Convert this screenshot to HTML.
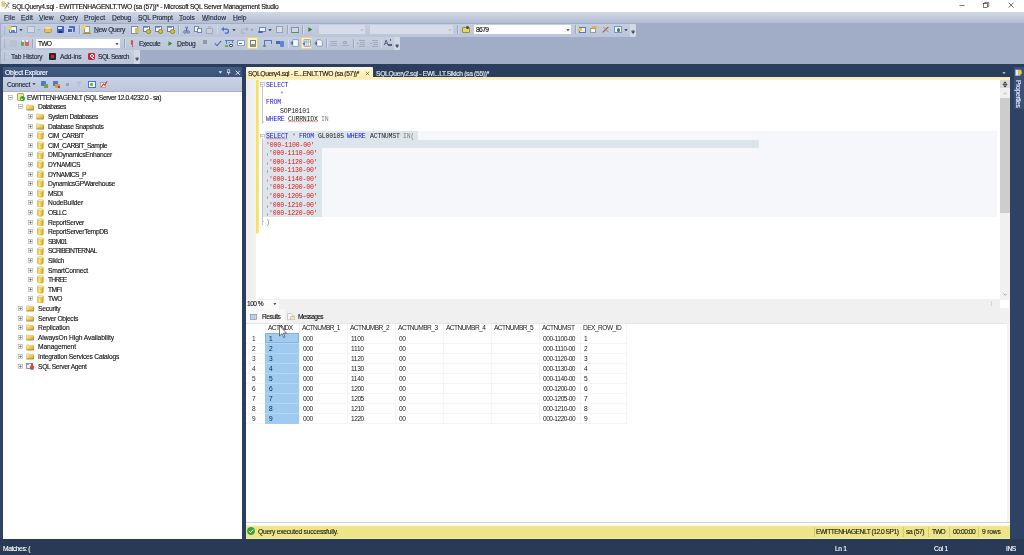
<!DOCTYPE html>
<html><head><meta charset="utf-8"><title>SQLQuery4.sql - Microsoft SQL Server Management Studio</title>
<style>
html,body{margin:0;padding:0;width:1024px;height:555px;overflow:hidden;background:#2c3e5e}
#r{position:relative;width:1024px;height:555px;overflow:hidden;font-family:"Liberation Sans",sans-serif}
#r div,#r span,#r svg{position:absolute;display:block}
.t{font-family:"Liberation Sans",sans-serif;white-space:pre;will-change:transform;-webkit-text-stroke:0.12px}
.t u{text-decoration-thickness:0.5px;text-underline-offset:0.4px;text-decoration-color:rgba(27,35,56,0.4)}
.m{font-family:"Liberation Mono",monospace;white-space:pre;will-change:transform}
</style></head>
<body><div id="r">
<div style="left:0px;top:0px;width:1024px;height:555px;background:#2c3e5e;"></div>
<div style="left:0px;top:0px;width:1024px;height:12px;background:#fff;"></div>
<svg style="left:1px;top:1.4px" width="9" height="9" viewBox="0 0 9 9"><path d="M0.8 1.2v3.6c0 1 3 1 3 0v-3.6z" fill="#e8d06a" stroke="#b09a3a" stroke-width="0.4"/><ellipse cx="2.3" cy="1.2" rx="1.5" ry="0.6" fill="#f7eeb0" stroke="#b09a3a" stroke-width="0.35"/><path d="M4.2 2.2l3.8 4.6M7.6 2.6l-3.6 5" stroke="#8a8a8a" stroke-width="1" fill="none"/><path d="M6.6 1.6l1.8 1.2" stroke="#6e6e6e" stroke-width="1.2"/></svg>
<span class="t" style="left:12.4px;top:3px;font-size:6.7px;line-height:8.71px;color:#111;letter-spacing:-0.281px;">SQLQuery4.sql - EWITTENHAGENLT.TWO (sa (57))* - Microsoft SQL Server Management Studio</span>
<svg style="left:958px;top:1px" width="8" height="8" viewBox="0 0 8 8"><path d="M1.5 4.5h5" stroke="#222" stroke-width="0.6"/></svg>
<svg style="left:981.5px;top:1px" width="8" height="8" viewBox="0 0 8 8"><rect x="1.5" y="2.6" width="4" height="4" fill="none" stroke="#222" stroke-width="0.6"/><path d="M2.8 2.6v-1.2h4v4h-1.2" fill="none" stroke="#222" stroke-width="0.6"/></svg>
<svg style="left:1006.5px;top:1px" width="8" height="8" viewBox="0 0 8 8"><path d="M1.6 1.6l5 5M6.6 1.6l-5 5" stroke="#222" stroke-width="0.65"/></svg>
<div style="left:0px;top:20px;width:1024px;height:43.8px;background:#a1adc7;"></div>
<div style="left:0px;top:12px;width:1024px;height:11px;background:linear-gradient(#d2d8e6,#b3bed3);"></div>
<span class="t" style="left:3.8px;top:14px;font-size:6.7px;line-height:8.71px;color:#1b2338;letter-spacing:0.180px;"><u>F</u>ile</span>
<span class="t" style="left:20.6px;top:14px;font-size:6.7px;line-height:8.71px;color:#1b2338;letter-spacing:0.117px;"><u>E</u>dit</span>
<span class="t" style="left:38.8px;top:14px;font-size:6.7px;line-height:8.71px;color:#1b2338;letter-spacing:0.031px;"><u>V</u>iew</span>
<span class="t" style="left:59.6px;top:14px;font-size:6.7px;line-height:8.71px;color:#1b2338;letter-spacing:-0.004px;"><u>Q</u>uery</span>
<span class="t" style="left:84px;top:14px;font-size:6.7px;line-height:8.71px;color:#1b2338;letter-spacing:0.053px;"><u>P</u>roject</span>
<span class="t" style="left:111.5px;top:14px;font-size:6.7px;line-height:8.71px;color:#1b2338;letter-spacing:-0.104px;"><u>D</u>ebug</span>
<span class="t" style="left:137.6px;top:14px;font-size:6.7px;line-height:8.71px;color:#1b2338;letter-spacing:-0.195px;"><u>S</u>QL Prompt</span>
<span class="t" style="left:179px;top:14px;font-size:6.7px;line-height:8.71px;color:#1b2338;letter-spacing:0.075px;"><u>T</u>ools</span>
<span class="t" style="left:201.6px;top:14px;font-size:6.7px;line-height:8.71px;color:#1b2338;letter-spacing:0.034px;"><u>W</u>indow</span>
<span class="t" style="left:232.6px;top:14px;font-size:6.7px;line-height:8.71px;color:#1b2338;letter-spacing:-0.141px;"><u>H</u>elp</span>
<div style="left:1px;top:24px;width:635px;height:13px;background:linear-gradient(#c6cfdf,#bac5d8);border-radius:1px"></div>
<div style="left:1px;top:37px;width:399px;height:13px;background:linear-gradient(#c6cfdf,#bac5d8);border-radius:1px"></div>
<div style="left:1px;top:50px;width:139px;height:14px;background:linear-gradient(#c6cfdf,#bac5d8);border-radius:1px"></div>
<svg style="left:3.5px;top:25.5px" width="2" height="9.5" viewBox="0 0 2 9.5"><rect x="0.4" y="0.50" width="0.7" height="0.6" fill="#7c89a5"/><rect x="0.4" y="1.60" width="0.7" height="0.6" fill="#7c89a5"/><rect x="0.4" y="2.70" width="0.7" height="0.6" fill="#7c89a5"/><rect x="0.4" y="3.80" width="0.7" height="0.6" fill="#7c89a5"/><rect x="0.4" y="4.90" width="0.7" height="0.6" fill="#7c89a5"/><rect x="0.4" y="6.00" width="0.7" height="0.6" fill="#7c89a5"/><rect x="0.4" y="7.10" width="0.7" height="0.6" fill="#7c89a5"/><rect x="0.4" y="8.20" width="0.7" height="0.6" fill="#7c89a5"/></svg>
<div style="left:9px;top:26.4px;width:7.5px;height:7px;background:#f4f6fb;border:0.5px solid #6b7fae;box-sizing:border-box"></div>
<div style="left:8px;top:25.9px;width:4px;height:4px;background:#f0d34f;border-radius:2px"></div>
<div style="left:11px;top:29.599999999999998px;width:4px;height:3px;background:#5f7fd0;"></div>
<svg style="left:19.3px;top:28.9px" width="4.0" height="2.4" viewBox="0 0 4 2.4"><path d="M0.4 0.2h3.2l-1.6 1.9z" fill="#1b2338"/></svg>
<div style="left:27px;top:26.4px;width:7.5px;height:7px;background:#d3d9e6;border:0.5px solid #a9b2c6;box-sizing:border-box"></div>
<svg style="left:36.5px;top:28.9px" width="4.0" height="2.4" viewBox="0 0 4 2.4"><path d="M0.4 0.2h3.2l-1.6 1.9z" fill="#a0aabf"/></svg>
<div style="left:43.5px;top:27.65px;width:8.5px;height:5.5px;background:#e9c455;border-radius:2.5px 3px 1.5px 1.5px;border:0.4px solid #b79233;box-sizing:border-box"></div>
<div style="left:45px;top:27.099999999999998px;width:6px;height:2px;background:#f6e08c;border-radius:2px"></div>
<div style="left:56.5px;top:26.4px;width:7px;height:7px;background:#3f5fc4;border-radius:0.8px"></div>
<div style="left:58px;top:26.5px;width:4px;height:2.8px;background:#e9eefb;"></div>
<div style="left:58.5px;top:31.1px;width:3px;height:2px;background:#1f2f7a;"></div>
<div style="left:69px;top:26.299999999999997px;width:6px;height:5.6px;background:#4e6ac6;border-radius:0.8px"></div>
<div style="left:67.3px;top:27.9px;width:6px;height:5.6px;background:#3f5fc4;border-radius:0.8px;border:0.4px solid #c9d3ee;box-sizing:border-box"></div>
<div style="left:79px;top:25.4px;width:0.5px;height:9px;background:#9ba7bf;"></div>
<div style="left:79.5px;top:25.4px;width:0.5px;height:9px;background:#d3dae7;"></div>
<div style="left:83.5px;top:25.9px;width:6.5px;height:7px;background:#fbfbf2;border:0.5px solid #9a9a8a;box-sizing:border-box"></div>
<div style="left:82px;top:25.299999999999997px;width:4.2px;height:4.2px;background:#efd84a;border-radius:2.2px"></div>
<div style="left:82.5px;top:33.05px;width:8px;height:0.9px;background:#a98f3a;"></div>
<span class="t" style="left:93.6px;top:26px;font-size:6.7px;line-height:8.71px;color:#1b2338;letter-spacing:-0.273px;"><u>N</u>ew Query</span>
<div style="left:131.4px;top:25.7px;width:6.4px;height:8px;background:#f7f8fc;border:0.5px solid #7c8fbb;box-sizing:border-box"></div>
<div style="left:135px;top:28.0px;width:3.6px;height:5.4px;background:#e6b93a;border-radius:1px"></div>
<div style="left:142.5px;top:25.9px;width:7px;height:6.4px;background:#f4f6fb;border:0.5px solid #6f7fa8;box-sizing:border-box"></div>
<div style="left:143.7px;top:27.0px;width:4px;height:1.4px;background:#8a9bc6;"></div>
<div style="left:146.3px;top:28.599999999999998px;width:5px;height:5px;background:#d4c62e;border-radius:2.2px;border:0.4px solid #8f8a2a;box-sizing:border-box"></div>
<div style="left:154.5px;top:25.9px;width:7px;height:6.4px;background:#f4f6fb;border:0.5px solid #6f7fa8;box-sizing:border-box"></div>
<div style="left:155.7px;top:27.0px;width:4px;height:1.4px;background:#8a9bc6;"></div>
<div style="left:158.3px;top:28.599999999999998px;width:5px;height:5px;background:#d4c62e;border-radius:2.2px;border:0.4px solid #8f8a2a;box-sizing:border-box"></div>
<div style="left:166.5px;top:25.9px;width:7px;height:6.4px;background:#f4f6fb;border:0.5px solid #6f7fa8;box-sizing:border-box"></div>
<div style="left:167.7px;top:27.0px;width:4px;height:1.4px;background:#8a9bc6;"></div>
<div style="left:170.3px;top:28.599999999999998px;width:5px;height:5px;background:#d4c62e;border-radius:2.2px;border:0.4px solid #8f8a2a;box-sizing:border-box"></div>
<div style="left:178px;top:25.4px;width:0.5px;height:9px;background:#9ba7bf;"></div>
<div style="left:178.5px;top:25.4px;width:0.5px;height:9px;background:#d3dae7;"></div>
<svg style="left:183px;top:25.9px" width="7" height="8" viewBox="0 0 7 8"><path d="M2.6 0.5l1.4 4.5M4.6 0.5l-1.4 4.5" stroke="#4a64b4" stroke-width="0.9" fill="none"/><circle cx="2" cy="6" r="1.3" fill="none" stroke="#4a64b4" stroke-width="0.8"/><circle cx="5.2" cy="6" r="1.3" fill="none" stroke="#4a64b4" stroke-width="0.8"/></svg>
<div style="left:193.5px;top:26.15px;width:5px;height:5.5px;background:#f4f6fb;border:0.5px solid #6f86c0;box-sizing:border-box"></div>
<div style="left:196.5px;top:27.95px;width:5px;height:5.5px;background:#f4f6fb;border:0.5px solid #6f86c0;box-sizing:border-box"></div>
<div style="left:206px;top:27.5px;width:7px;height:6px;background:#c9cfdc;border:0.5px solid #a3abbd;box-sizing:border-box"></div>
<div style="left:208px;top:25.9px;width:3px;height:2px;background:#b4bbcb;"></div>
<div style="left:216.5px;top:25.4px;width:0.5px;height:9px;background:#9ba7bf;"></div>
<div style="left:217.0px;top:25.4px;width:0.5px;height:9px;background:#d3dae7;"></div>
<svg style="left:220.5px;top:25.9px" width="9" height="8" viewBox="0 0 9 8"><path d="M1.2 3.2h4.2a2 2 0 0 1 0 4h-1.6" stroke="#4a6ac8" stroke-width="1.3" fill="none"/><path d="M0.3 3.2l2.6-2.4v4.8z" fill="#4a6ac8"/></svg>
<svg style="left:232.0px;top:28.9px" width="4.0" height="2.4" viewBox="0 0 4 2.4"><path d="M0.4 0.2h3.2l-1.6 1.9z" fill="#1b2338"/></svg>
<svg style="left:239.5px;top:25.9px" width="9" height="8" viewBox="0 0 9 8"><path d="M7.8 3.2h-4.2a2 2 0 0 0 0 4h1.6" stroke="#a7b0c5" stroke-width="1.1" fill="none"/><path d="M8.7 3.2l-2.6-2.4v4.8z" fill="#a7b0c5"/></svg>
<svg style="left:250.3px;top:28.9px" width="4.0" height="2.4" viewBox="0 0 4 2.4"><path d="M0.4 0.2h3.2l-1.6 1.9z" fill="#8c96ad"/></svg>
<div style="left:259px;top:26.9px;width:7px;height:5px;background:#e9edf6;border:0.5px solid #6f86c0;box-sizing:border-box"></div>
<div style="left:258px;top:30.65px;width:5px;height:2.5px;background:#4a64b4;border-radius:1px"></div>
<svg style="left:268.3px;top:28.9px" width="4.0" height="2.4" viewBox="0 0 4 2.4"><path d="M0.4 0.2h3.2l-1.6 1.9z" fill="#1b2338"/></svg>
<div style="left:275.5px;top:26.349999999999998px;width:7px;height:6.5px;background:#d8dde9;border:0.5px solid #9aa3b8;box-sizing:border-box"></div>
<div style="left:287.3px;top:25.4px;width:0.5px;height:9px;background:#9ba7bf;"></div>
<div style="left:287.8px;top:25.4px;width:0.5px;height:9px;background:#d3dae7;"></div>
<div style="left:291px;top:26.9px;width:8px;height:6px;background:#cfd6e4;border:0.5px solid #8793ad;box-sizing:border-box"></div>
<div style="left:292px;top:32.449999999999996px;width:7px;height:0.9px;background:#5d8a65;"></div>
<div style="left:302px;top:25.4px;width:0.5px;height:9px;background:#9ba7bf;"></div>
<div style="left:302.5px;top:25.4px;width:0.5px;height:9px;background:#d3dae7;"></div>
<svg style="left:307.5px;top:27.299999999999997px" width="5" height="5.2" viewBox="0 0 5 5.2"><path d="M0.4 0.3l3.8 2.3-3.8 2.3z" fill="#2d7f2d"/></svg>
<div style="left:318.5px;top:24.9px;width:46.5px;height:9.4px;background:#d6dce8;border-radius:0.8px"></div>
<svg style="left:359.5px;top:28.9px" width="4.0" height="2.4" viewBox="0 0 4 2.4"><path d="M0.4 0.2h3.2l-1.6 1.9z" fill="#aab3c7"/></svg>
<div style="left:369.5px;top:24.9px;width:83.5px;height:9.4px;background:#d6dce8;border-radius:0.8px"></div>
<svg style="left:448.0px;top:28.9px" width="4.0" height="2.4" viewBox="0 0 4 2.4"><path d="M0.4 0.2h3.2l-1.6 1.9z" fill="#aab3c7"/></svg>
<div style="left:457px;top:25.4px;width:0.5px;height:9px;background:#9ba7bf;"></div>
<div style="left:457.5px;top:25.4px;width:0.5px;height:9px;background:#d3dae7;"></div>
<div style="left:461.5px;top:27.2px;width:8px;height:6px;background:#ecd366;border:0.5px solid #a88d2e;box-sizing:border-box;border-radius:1px"></div>
<div style="left:466px;top:26.2px;width:3px;height:3px;background:#4a4a3a;border-radius:1.5px"></div>
<div style="left:473.8px;top:24.9px;width:97.2px;height:9.4px;background:#fff;border-radius:0.6px"></div>
<span class="t" style="left:476px;top:26px;font-size:6.7px;line-height:8.71px;color:#111;letter-spacing:-0.598px;">8679</span>
<svg style="left:566.0px;top:28.9px" width="4.0" height="2.4" viewBox="0 0 4 2.4"><path d="M0.4 0.2h3.2l-1.6 1.9z" fill="#1b2338"/></svg>
<div style="left:575px;top:25.4px;width:0.5px;height:9px;background:#9ba7bf;"></div>
<div style="left:575.5px;top:25.4px;width:0.5px;height:9px;background:#d3dae7;"></div>
<div style="left:578.5px;top:26.9px;width:7.5px;height:6px;background:#e9edf6;border:0.5px solid #5a78c4;box-sizing:border-box"></div>
<div style="left:578px;top:28.15px;width:4px;height:2.5px;background:#e8c24a;"></div>
<div style="left:590px;top:28.2px;width:6px;height:5px;background:#f4f4f4;border:0.5px solid #9a9aa5;box-sizing:border-box"></div>
<div style="left:591.5px;top:26.099999999999998px;width:5px;height:2.4px;background:#e3b93c;"></div>
<svg style="left:602.4px;top:26.4px" width="8" height="7" viewBox="0 0 8 7"><path d="M0.8 6.4l5.6-5.6" stroke="#c4473a" stroke-width="1.1"/><path d="M1.5 1l5 5.2" stroke="#8a93a8" stroke-width="1"/></svg>
<div style="left:614.3px;top:26.4px;width:8.2px;height:7px;background:#eef1f8;border:0.5px solid #7a93d0;box-sizing:border-box"></div>
<div style="left:616.8px;top:28.4px;width:3.6px;height:3.6px;background:#3f8a4a;border-radius:1.8px"></div>
<svg style="left:624.4px;top:28.9px" width="4.0" height="2.4" viewBox="0 0 4 2.4"><path d="M0.4 0.2h3.2l-1.6 1.9z" fill="#1b2338"/></svg>
<div style="left:630px;top:24px;width:6px;height:13px;background:#d2d9e6;border-radius:0 1.5px 1.5px 0"></div>
<svg style="left:631.4px;top:30.099999999999998px" width="4.2" height="4" viewBox="0 0 4.2 4"><path d="M0.6 0.4h3M0.6 1.6h3l-1.5 1.9z" fill="#2a3350" stroke="#2a3350" stroke-width="0.5"/></svg>
<svg style="left:3.5px;top:38.5px" width="2" height="9.5" viewBox="0 0 2 9.5"><rect x="0.4" y="0.50" width="0.7" height="0.6" fill="#7c89a5"/><rect x="0.4" y="1.60" width="0.7" height="0.6" fill="#7c89a5"/><rect x="0.4" y="2.70" width="0.7" height="0.6" fill="#7c89a5"/><rect x="0.4" y="3.80" width="0.7" height="0.6" fill="#7c89a5"/><rect x="0.4" y="4.90" width="0.7" height="0.6" fill="#7c89a5"/><rect x="0.4" y="6.00" width="0.7" height="0.6" fill="#7c89a5"/><rect x="0.4" y="7.10" width="0.7" height="0.6" fill="#7c89a5"/><rect x="0.4" y="8.20" width="0.7" height="0.6" fill="#7c89a5"/></svg>
<div style="left:10px;top:40.05px;width:6.5px;height:6.5px;background:#b9c2d4;border-radius:1px"></div>
<div style="left:21px;top:41.4px;width:3.4px;height:5px;background:#6aa35a;border-radius:1px"></div>
<div style="left:25.4px;top:41.4px;width:3.4px;height:5px;background:#d9655a;border-radius:1px"></div>
<div style="left:22px;top:40.099999999999994px;width:1.6px;height:2px;background:#eef2f8;"></div>
<div style="left:26.2px;top:40.099999999999994px;width:1.6px;height:2px;background:#eef2f8;"></div>
<div style="left:32.3px;top:38.8px;width:0.5px;height:9px;background:#9ba7bf;"></div>
<div style="left:32.8px;top:38.8px;width:0.5px;height:9px;background:#d3dae7;"></div>
<div style="left:35.8px;top:38.8px;width:84.4px;height:9.2px;background:#fff;border-radius:0.6px"></div>
<span class="t" style="left:38px;top:40px;font-size:6.7px;line-height:8.71px;color:#111;letter-spacing:-0.803px;">TWO</span>
<svg style="left:115.0px;top:42.5px" width="4.0" height="2.4" viewBox="0 0 4 2.4"><path d="M0.4 0.2h3.2l-1.6 1.9z" fill="#1b2338"/></svg>
<div style="left:124.2px;top:38.8px;width:0.5px;height:9px;background:#9ba7bf;"></div>
<div style="left:124.7px;top:38.8px;width:0.5px;height:9px;background:#d3dae7;"></div>
<div style="left:131.3px;top:40.3px;width:1.6px;height:4.4px;background:#d4553a;border-radius:0.8px"></div>
<div style="left:131.5px;top:45.449999999999996px;width:1.2px;height:1.3px;background:#d4553a;border-radius:0.6px"></div>
<span class="t" style="left:138.8px;top:40px;font-size:6.7px;line-height:8.71px;color:#1b2338;letter-spacing:-0.410px;">E<u>x</u>ecute</span>
<svg style="left:168px;top:40.699999999999996px" width="5" height="5.2" viewBox="0 0 5 5.2"><path d="M0.4 0.2l4 2.4-4 2.4z" fill="#3a8f3a"/></svg>
<span class="t" style="left:176.6px;top:40px;font-size:6.7px;line-height:8.71px;color:#1b2338;letter-spacing:-0.224px;"><u>D</u>ebug</span>
<div style="left:203px;top:39.99999999999999px;width:4.4px;height:4.4px;background:#8f99ae;"></div>
<svg style="left:213.5px;top:40.3px" width="8" height="6.5" viewBox="0 0 8 6.5"><path d="M0.8 3.4l2.2 2.2 4.2-4.8" stroke="#4d6fb8" stroke-width="1.1" fill="none"/></svg>
<div style="left:225px;top:39.75px;width:8.6px;height:1.1px;background:#4a86b4;"></div>
<div style="left:226px;top:40.599999999999994px;width:0.9px;height:3.4px;background:#4a86b4;"></div>
<div style="left:231.6px;top:40.6px;width:0.9px;height:2.6px;background:#4a86b4;"></div>
<div style="left:225px;top:44.6px;width:2.8px;height:2.6px;background:#5aac3a;border-radius:1.3px"></div>
<div style="left:229.4px;top:43.8px;width:4px;height:3px;background:#f1f4fa;border-radius:1px;border:0.4px solid #46506a;box-sizing:border-box"></div>
<div style="left:228.6px;top:41.9px;width:1.8px;height:1.6px;background:#6a8ad0;"></div>
<div style="left:237px;top:40.3px;width:7.5px;height:6px;background:#f7f9fd;border:0.5px solid #8da0cc;box-sizing:border-box"></div>
<div style="left:238.5px;top:42.55px;width:3px;height:1.5px;background:#5a78c4;"></div>
<div style="left:246.6px;top:37.0px;width:11.8px;height:11.6px;background:#fdf3bd;border:0.5px solid #ecd488;box-sizing:border-box;border-radius:1px"></div>
<div style="left:249.5px;top:39.55px;width:6.5px;height:7.5px;background:#f4f4f4;border:0.5px solid #7a7a7a;box-sizing:border-box"></div>
<div style="left:250px;top:43.599999999999994px;width:5.5px;height:3.2px;background:#8f8f8f;"></div>
<div style="left:263.5px;top:40.099999999999994px;width:8.5px;height:1.2px;background:#4a78c4;"></div>
<div style="left:264px;top:40.8px;width:0.9px;height:4px;background:#4a78c4;"></div>
<div style="left:270.5px;top:41.3px;width:0.9px;height:3px;background:#4a78c4;"></div>
<div style="left:263.3px;top:44.49999999999999px;width:2.6px;height:2.4px;background:#4aa04a;border-radius:1.2px"></div>
<div style="left:275.5px;top:40.55px;width:4.5px;height:3.5px;background:#4a6ac0;"></div>
<div style="left:279.5px;top:41.099999999999994px;width:4.5px;height:6px;background:#5f86d8;border-radius:0.8px"></div>
<div style="left:287.6px;top:38.8px;width:0.5px;height:9px;background:#9ba7bf;"></div>
<div style="left:288.1px;top:38.8px;width:0.5px;height:9px;background:#d3dae7;"></div>
<svg style="left:290px;top:39.3px" width="10" height="8" viewBox="0 0 10 8"><path d="M3 0.6h5.4v6.8h-5.4l-2.2-3.4z" fill="#f4f7fd" stroke="#5a74b8" stroke-width="0.6"/><path d="M0.6 4l2.6-2.2v4.4z" fill="#4a6ac0"/></svg>
<div style="left:300.6px;top:37.0px;width:11.8px;height:11.6px;background:#fdf3bd;border:0.5px solid #ecd488;box-sizing:border-box;border-radius:1px"></div>
<svg style="left:302px;top:39.3px" width="10" height="8" viewBox="0 0 10 8"><rect x="2" y="0.8" width="6.4" height="6.4" fill="#f4f7fd" stroke="#5a74b8" stroke-width="0.6"/><path d="M2 3h6.4M4.2 0.8v6.4M6.3 0.8v6.4" stroke="#5a74b8" stroke-width="0.45"/><path d="M0.4 4.8l2.4-1.8v3.6z" fill="#4a6ac0"/></svg>
<svg style="left:313.5px;top:39.3px" width="10" height="8" viewBox="0 0 10 8"><path d="M3 0.8h3.4l2 2v4.4h-5.4l-2.2-3z" fill="#f4f7fd" stroke="#5a74b8" stroke-width="0.6"/><path d="M0.6 4.2l2.6-2.2v4.4z" fill="#4a6ac0"/></svg>
<div style="left:326.2px;top:38.8px;width:0.5px;height:9px;background:#9ba7bf;"></div>
<div style="left:326.7px;top:38.8px;width:0.5px;height:9px;background:#d3dae7;"></div>
<div style="left:329.5px;top:41.4px;width:7.5px;height:0.8px;background:#a4adc1;"></div>
<div style="left:330.5px;top:43.199999999999996px;width:6px;height:0.8px;background:#a4adc1;"></div>
<div style="left:329.5px;top:44.9px;width:7.5px;height:0.8px;background:#a4adc1;"></div>
<div style="left:341.5px;top:44.9px;width:7.5px;height:0.8px;background:#a4adc1;"></div>
<div style="left:343px;top:41.05px;width:4px;height:2.5px;background:none;border:0.6px solid #8791a7;border-radius:1.5px;box-sizing:border-box"></div>
<div style="left:353.2px;top:38.8px;width:0.5px;height:9px;background:#9ba7bf;"></div>
<div style="left:353.7px;top:38.8px;width:0.5px;height:9px;background:#d3dae7;"></div>
<div style="left:358.5px;top:40.4px;width:6px;height:0.8px;background:#a0aabf;"></div>
<div style="left:360.0px;top:42.1px;width:4.5px;height:0.8px;background:#a0aabf;"></div>
<div style="left:360.0px;top:43.8px;width:4.5px;height:0.8px;background:#a0aabf;"></div>
<div style="left:358.5px;top:45.5px;width:6px;height:0.8px;background:#a0aabf;"></div>
<div style="left:356.5px;top:42.5px;width:2.4px;height:1.6px;background:#a0aabf;"></div>
<div style="left:371.5px;top:40.4px;width:6px;height:0.8px;background:#a0aabf;"></div>
<div style="left:373.0px;top:42.1px;width:4.5px;height:0.8px;background:#a0aabf;"></div>
<div style="left:373.0px;top:43.8px;width:4.5px;height:0.8px;background:#a0aabf;"></div>
<div style="left:371.5px;top:45.5px;width:6px;height:0.8px;background:#a0aabf;"></div>
<div style="left:369.5px;top:42.5px;width:2.4px;height:1.6px;background:#a0aabf;"></div>
<div style="left:380.6px;top:38.8px;width:0.5px;height:9px;background:#9ba7bf;"></div>
<div style="left:381.1px;top:38.8px;width:0.5px;height:9px;background:#d3dae7;"></div>
<span class="t" style="left:383.5px;top:39px;font-size:6.4px;line-height:8.32px;color:#3a4560;">A</span>
<div style="left:388px;top:43.8px;width:4.2px;height:2.6px;background:none;border:0.5px solid #56607a;box-sizing:border-box"></div>
<div style="left:389.5px;top:39.099999999999994px;width:0.8px;height:2.4px;background:#56607a;"></div>
<div style="left:394px;top:37px;width:6px;height:13px;background:#d2d9e6;border-radius:0 1.5px 1.5px 0"></div>
<svg style="left:395.2px;top:43.5px" width="4.2" height="4" viewBox="0 0 4.2 4"><path d="M0.6 0.4h3M0.6 1.6h3l-1.5 1.9z" fill="#2a3350" stroke="#2a3350" stroke-width="0.5"/></svg>
<svg style="left:3.5px;top:51.8px" width="2" height="9.8" viewBox="0 0 2 9.8"><rect x="0.4" y="0.50" width="0.7" height="0.6" fill="#7c89a5"/><rect x="0.4" y="1.60" width="0.7" height="0.6" fill="#7c89a5"/><rect x="0.4" y="2.70" width="0.7" height="0.6" fill="#7c89a5"/><rect x="0.4" y="3.80" width="0.7" height="0.6" fill="#7c89a5"/><rect x="0.4" y="4.90" width="0.7" height="0.6" fill="#7c89a5"/><rect x="0.4" y="6.00" width="0.7" height="0.6" fill="#7c89a5"/><rect x="0.4" y="7.10" width="0.7" height="0.6" fill="#7c89a5"/><rect x="0.4" y="8.20" width="0.7" height="0.6" fill="#7c89a5"/></svg>
<span class="t" style="left:11.2px;top:53px;font-size:6.7px;line-height:8.71px;color:#1b2338;letter-spacing:-0.187px;">Tab History</span>
<div style="left:48.8px;top:53.1px;width:7.6px;height:7px;background:#2a2a2a;border-radius:1px"></div>
<div style="left:50.8px;top:54.9px;width:3.6px;height:3.4px;background:#d6242a;"></div>
<span class="t" style="left:59.6px;top:53px;font-size:6.7px;line-height:8.71px;color:#1b2338;letter-spacing:-0.184px;">Add-ins</span>
<div style="left:88.3px;top:52.9px;width:7px;height:7.4px;background:#cf1f2a;border-radius:1.4px"></div>
<div style="left:89.8px;top:54.300000000000004px;width:3.8px;height:3.8px;background:#cf1f2a;border:0.8px solid #fff;border-radius:2px;box-sizing:border-box"></div>
<div style="left:92.4px;top:58.35px;width:2px;height:0.9px;background:#fff;transform:rotate(45deg)"></div>
<span class="t" style="left:98.2px;top:53px;font-size:6.7px;line-height:8.71px;color:#1b2338;letter-spacing:-0.519px;">SQL Search</span>
<div style="left:134px;top:50px;width:6px;height:14px;background:#d2d9e6;border-radius:0 1.5px 1.5px 0"></div>
<svg style="left:135.4px;top:57.2px" width="4.2" height="4" viewBox="0 0 4.2 4"><path d="M0.6 0.4h3M0.6 1.6h3l-1.5 1.9z" fill="#2a3350" stroke="#2a3350" stroke-width="0.5"/></svg>
<div style="left:0px;top:80px;width:3px;height:459px;background:#2f4364;"></div>
<div style="left:2.8px;top:67px;width:239.4px;height:472px;background:#fff;"></div>
<div style="left:2.8px;top:67px;width:239.4px;height:10px;background:linear-gradient(#445d85,#3c5278);"></div>
<span class="t" style="left:4.6px;top:69px;font-size:6.7px;line-height:8.71px;color:#fff;letter-spacing:-0.240px;">Object Explorer</span>
<svg style="left:218.29999999999998px;top:71.2px" width="4.8" height="2.88" viewBox="0 0 4 2.4"><path d="M0.4 0.2h3.2l-1.6 1.9z" fill="#e1e7f3"/></svg>
<svg style="left:226.3px;top:69.2px" width="5" height="6.4" viewBox="0 0 5 6.4"><path d="M1.6 0.6h2v3h-2zM0.8 3.6h3.6M2.6 3.6v2.4" stroke="#dfe5f2" stroke-width="0.7" fill="none"/></svg>
<svg style="left:234.6px;top:69.6px" width="5.6" height="5.6" viewBox="0 0 5.6 5.6"><path d="M0.7 0.7l4.2 4.2M4.9 0.7l-4.2 4.2" stroke="#eef2fa" stroke-width="0.95"/></svg>
<div style="left:2.8px;top:77.2px;width:239.4px;height:14.5px;background:linear-gradient(#c8d2e4,#bbc7da);"></div>
<div style="left:2.8px;top:91px;width:239.4px;height:0.8px;background:#a9b3c6;"></div>
<span class="t" style="left:7px;top:81px;font-size:6.7px;line-height:8.71px;color:#1b2338;letter-spacing:-0.275px;">Connect</span>
<svg style="left:32.0px;top:83.4px" width="4.0" height="2.4" viewBox="0 0 4 2.4"><path d="M0.4 0.2h3.2l-1.6 1.9z" fill="#1b2338"/></svg>
<div style="left:41px;top:81.25px;width:5px;height:4.5px;background:#4f7ad0;border-radius:0.6px"></div>
<div style="left:43.5px;top:84.05px;width:4.5px;height:3.5px;background:#6aa84a;"></div>
<div style="left:52.5px;top:81.25px;width:5px;height:4.5px;background:#4f7ad0;border-radius:0.6px"></div>
<div style="left:55px;top:84.05px;width:4.5px;height:3.5px;background:#d6a030;"></div>
<div style="left:58px;top:85.89999999999999px;width:2px;height:2px;background:#c43a2a;"></div>
<div style="left:65.5px;top:82.5px;width:3.6px;height:3.6px;background:#9aa4b8;"></div>
<svg style="left:75.5px;top:80.8px" width="6" height="7" viewBox="0 0 6 7"><path d="M0.4 0.6h5.2l-2 2.8v3l-1.2-0.8v-2.2z" fill="#b5bdcd"/></svg>
<div style="left:87.5px;top:80.6px;width:8px;height:7.4px;background:#f2f6fd;border:0.8px solid #4a74c8;box-sizing:border-box"></div>
<div style="left:89.8px;top:82.7px;width:3.6px;height:3.6px;background:#7ab030;border-radius:1px"></div>
<div style="left:99.5px;top:81.89999999999999px;width:6px;height:6px;background:#f6e9e9;border:0.5px solid #c9a0a0;box-sizing:border-box"></div>
<svg style="left:100px;top:80.3px" width="8" height="8" viewBox="0 0 8 8"><path d="M1.2 7l2.4-3 1.2 1.2 2.2-4" stroke="#d23a3a" stroke-width="1.1" fill="none"/></svg>
<svg style="left:8.0px;top:94.8px" width="5" height="5" viewBox="0 0 5 5"><rect x="0.3" y="0.3" width="4.4" height="4.4" fill="#fff" stroke="#9a9a9a" stroke-width="0.55"/><path d="M1.2 2.5h2.6" stroke="#444" stroke-width="0.55"/></svg>
<div style="left:17.099999999999998px;top:93.2px;width:7px;height:8.2px;background:#efe6a0;border:0.7px solid #bcaa48;box-sizing:border-box;border-radius:1px"></div>
<div style="left:19.799999999999997px;top:96.2px;width:5px;height:5px;background:#3fa030;border-radius:2.5px"></div>
<svg style="left:21.4px;top:97.5px" width="2.4" height="2.6" viewBox="0 0 2.4 2.6"><path d="M0.3 0.2l1.8 1.1-1.8 1.1z" fill="#fff"/></svg>
<span class="t" style="left:27.2px;top:94px;font-size:6.7px;line-height:8.71px;color:#111;letter-spacing:-0.415px;">EWITTENHAGENLT (SQL Server 12.0.4232.0 - sa)</span>
<svg style="left:18.1px;top:104.39999999999999px" width="5" height="5" viewBox="0 0 5 5"><rect x="0.3" y="0.3" width="4.4" height="4.4" fill="#fff" stroke="#9a9a9a" stroke-width="0.55"/><path d="M1.2 2.5h2.6" stroke="#444" stroke-width="0.55"/></svg>
<svg style="left:25.9px;top:103.49999999999999px" width="8.2" height="7" viewBox="0 0 8.2 7"><defs><linearGradient id="fg" x1="0" y1="0" x2="0.6" y2="1"><stop offset="0" stop-color="#fff6c4"/><stop offset="0.55" stop-color="#f3d162"/><stop offset="1" stop-color="#e2ad2c"/></linearGradient></defs><path d="M0.4 1.3q0-0.5 0.5-0.5h1.9l0.7 0.8h3.5q0.5 0 0.5 0.5v3.9h-7.1z" fill="url(#fg)" stroke="#bf9a38" stroke-width="0.4"/><path d="M0.4 6.15h7.2M7.55 2.2v4" stroke="#7d6526" stroke-width="0.5" fill="none" opacity="0.8"/></svg>
<span class="t" style="left:37.7px;top:103px;font-size:6.7px;line-height:8.71px;color:#111;letter-spacing:-0.443px;">Databases</span>
<svg style="left:28.2px;top:114.0px" width="5" height="5" viewBox="0 0 5 5"><rect x="0.3" y="0.3" width="4.4" height="4.4" fill="#fff" stroke="#9a9a9a" stroke-width="0.55"/><path d="M1.2 2.5h2.6" stroke="#444" stroke-width="0.55"/><path d="M2.5 1.2v2.6" stroke="#444" stroke-width="0.55"/></svg>
<svg style="left:36.0px;top:113.1px" width="8.2" height="7" viewBox="0 0 8.2 7"><defs><linearGradient id="fg" x1="0" y1="0" x2="0.6" y2="1"><stop offset="0" stop-color="#fff6c4"/><stop offset="0.55" stop-color="#f3d162"/><stop offset="1" stop-color="#e2ad2c"/></linearGradient></defs><path d="M0.4 1.3q0-0.5 0.5-0.5h1.9l0.7 0.8h3.5q0.5 0 0.5 0.5v3.9h-7.1z" fill="url(#fg)" stroke="#bf9a38" stroke-width="0.4"/><path d="M0.4 6.15h7.2M7.55 2.2v4" stroke="#7d6526" stroke-width="0.5" fill="none" opacity="0.8"/></svg>
<span class="t" style="left:47.800000000000004px;top:113px;font-size:6.7px;line-height:8.71px;color:#111;letter-spacing:-0.384px;">System Databases</span>
<svg style="left:28.2px;top:123.6px" width="5" height="5" viewBox="0 0 5 5"><rect x="0.3" y="0.3" width="4.4" height="4.4" fill="#fff" stroke="#9a9a9a" stroke-width="0.55"/><path d="M1.2 2.5h2.6" stroke="#444" stroke-width="0.55"/><path d="M2.5 1.2v2.6" stroke="#444" stroke-width="0.55"/></svg>
<svg style="left:36.0px;top:122.69999999999999px" width="8.2" height="7" viewBox="0 0 8.2 7"><defs><linearGradient id="fg" x1="0" y1="0" x2="0.6" y2="1"><stop offset="0" stop-color="#fff6c4"/><stop offset="0.55" stop-color="#f3d162"/><stop offset="1" stop-color="#e2ad2c"/></linearGradient></defs><path d="M0.4 1.3q0-0.5 0.5-0.5h1.9l0.7 0.8h3.5q0.5 0 0.5 0.5v3.9h-7.1z" fill="url(#fg)" stroke="#bf9a38" stroke-width="0.4"/><path d="M0.4 6.15h7.2M7.55 2.2v4" stroke="#7d6526" stroke-width="0.5" fill="none" opacity="0.8"/></svg>
<span class="t" style="left:47.800000000000004px;top:123px;font-size:6.7px;line-height:8.71px;color:#111;letter-spacing:-0.366px;">Database Snapshots</span>
<svg style="left:28.2px;top:133.2px" width="5" height="5" viewBox="0 0 5 5"><rect x="0.3" y="0.3" width="4.4" height="4.4" fill="#fff" stroke="#9a9a9a" stroke-width="0.55"/><path d="M1.2 2.5h2.6" stroke="#444" stroke-width="0.55"/><path d="M2.5 1.2v2.6" stroke="#444" stroke-width="0.55"/></svg>
<svg style="left:36.9px;top:131.29999999999998px" width="7" height="8.8" viewBox="0 0 7 8.8"><defs><linearGradient id="dg" x1="0" y1="0" x2="1" y2="0"><stop offset="0" stop-color="#dcc070"/><stop offset="0.32" stop-color="#ffe968"/><stop offset="0.7" stop-color="#f0bd3a"/><stop offset="1" stop-color="#d89a28"/></linearGradient></defs><path d="M0.5 1.7v5.3c0 1.7 5.8 1.7 5.8 0v-5.3z" fill="url(#dg)" stroke="#b98d2c" stroke-width="0.4"/><ellipse cx="3.4" cy="1.7" rx="2.9" ry="1.15" fill="#fdf0a8" stroke="#c39a34" stroke-width="0.4"/></svg>
<span class="t" style="left:47.800000000000004px;top:132px;font-size:6.7px;line-height:8.71px;color:#111;letter-spacing:-0.502px;">CIM_CARBIT</span>
<svg style="left:28.2px;top:142.8px" width="5" height="5" viewBox="0 0 5 5"><rect x="0.3" y="0.3" width="4.4" height="4.4" fill="#fff" stroke="#9a9a9a" stroke-width="0.55"/><path d="M1.2 2.5h2.6" stroke="#444" stroke-width="0.55"/><path d="M2.5 1.2v2.6" stroke="#444" stroke-width="0.55"/></svg>
<svg style="left:36.9px;top:140.9px" width="7" height="8.8" viewBox="0 0 7 8.8"><defs><linearGradient id="dg" x1="0" y1="0" x2="1" y2="0"><stop offset="0" stop-color="#dcc070"/><stop offset="0.32" stop-color="#ffe968"/><stop offset="0.7" stop-color="#f0bd3a"/><stop offset="1" stop-color="#d89a28"/></linearGradient></defs><path d="M0.5 1.7v5.3c0 1.7 5.8 1.7 5.8 0v-5.3z" fill="url(#dg)" stroke="#b98d2c" stroke-width="0.4"/><ellipse cx="3.4" cy="1.7" rx="2.9" ry="1.15" fill="#fdf0a8" stroke="#c39a34" stroke-width="0.4"/></svg>
<span class="t" style="left:47.800000000000004px;top:142px;font-size:6.7px;line-height:8.71px;color:#111;letter-spacing:-0.465px;">CIM_CARBIT_Sample</span>
<svg style="left:28.2px;top:152.39999999999998px" width="5" height="5" viewBox="0 0 5 5"><rect x="0.3" y="0.3" width="4.4" height="4.4" fill="#fff" stroke="#9a9a9a" stroke-width="0.55"/><path d="M1.2 2.5h2.6" stroke="#444" stroke-width="0.55"/><path d="M2.5 1.2v2.6" stroke="#444" stroke-width="0.55"/></svg>
<svg style="left:36.9px;top:150.49999999999997px" width="7" height="8.8" viewBox="0 0 7 8.8"><defs><linearGradient id="dg" x1="0" y1="0" x2="1" y2="0"><stop offset="0" stop-color="#dcc070"/><stop offset="0.32" stop-color="#ffe968"/><stop offset="0.7" stop-color="#f0bd3a"/><stop offset="1" stop-color="#d89a28"/></linearGradient></defs><path d="M0.5 1.7v5.3c0 1.7 5.8 1.7 5.8 0v-5.3z" fill="url(#dg)" stroke="#b98d2c" stroke-width="0.4"/><ellipse cx="3.4" cy="1.7" rx="2.9" ry="1.15" fill="#fdf0a8" stroke="#c39a34" stroke-width="0.4"/></svg>
<span class="t" style="left:47.800000000000004px;top:151px;font-size:6.7px;line-height:8.71px;color:#111;letter-spacing:-0.244px;">DMDynamicsEnhancer</span>
<svg style="left:28.2px;top:162.0px" width="5" height="5" viewBox="0 0 5 5"><rect x="0.3" y="0.3" width="4.4" height="4.4" fill="#fff" stroke="#9a9a9a" stroke-width="0.55"/><path d="M1.2 2.5h2.6" stroke="#444" stroke-width="0.55"/><path d="M2.5 1.2v2.6" stroke="#444" stroke-width="0.55"/></svg>
<svg style="left:36.9px;top:160.1px" width="7" height="8.8" viewBox="0 0 7 8.8"><defs><linearGradient id="dg" x1="0" y1="0" x2="1" y2="0"><stop offset="0" stop-color="#dcc070"/><stop offset="0.32" stop-color="#ffe968"/><stop offset="0.7" stop-color="#f0bd3a"/><stop offset="1" stop-color="#d89a28"/></linearGradient></defs><path d="M0.5 1.7v5.3c0 1.7 5.8 1.7 5.8 0v-5.3z" fill="url(#dg)" stroke="#b98d2c" stroke-width="0.4"/><ellipse cx="3.4" cy="1.7" rx="2.9" ry="1.15" fill="#fdf0a8" stroke="#c39a34" stroke-width="0.4"/></svg>
<span class="t" style="left:47.800000000000004px;top:161px;font-size:6.7px;line-height:8.71px;color:#111;letter-spacing:-0.414px;">DYNAMICS</span>
<svg style="left:28.2px;top:171.6px" width="5" height="5" viewBox="0 0 5 5"><rect x="0.3" y="0.3" width="4.4" height="4.4" fill="#fff" stroke="#9a9a9a" stroke-width="0.55"/><path d="M1.2 2.5h2.6" stroke="#444" stroke-width="0.55"/><path d="M2.5 1.2v2.6" stroke="#444" stroke-width="0.55"/></svg>
<svg style="left:36.9px;top:169.7px" width="7" height="8.8" viewBox="0 0 7 8.8"><defs><linearGradient id="dg" x1="0" y1="0" x2="1" y2="0"><stop offset="0" stop-color="#dcc070"/><stop offset="0.32" stop-color="#ffe968"/><stop offset="0.7" stop-color="#f0bd3a"/><stop offset="1" stop-color="#d89a28"/></linearGradient></defs><path d="M0.5 1.7v5.3c0 1.7 5.8 1.7 5.8 0v-5.3z" fill="url(#dg)" stroke="#b98d2c" stroke-width="0.4"/><ellipse cx="3.4" cy="1.7" rx="2.9" ry="1.15" fill="#fdf0a8" stroke="#c39a34" stroke-width="0.4"/></svg>
<span class="t" style="left:47.800000000000004px;top:171px;font-size:6.7px;line-height:8.71px;color:#111;letter-spacing:-0.548px;">DYNAMICS_P</span>
<svg style="left:28.2px;top:181.2px" width="5" height="5" viewBox="0 0 5 5"><rect x="0.3" y="0.3" width="4.4" height="4.4" fill="#fff" stroke="#9a9a9a" stroke-width="0.55"/><path d="M1.2 2.5h2.6" stroke="#444" stroke-width="0.55"/><path d="M2.5 1.2v2.6" stroke="#444" stroke-width="0.55"/></svg>
<svg style="left:36.9px;top:179.29999999999998px" width="7" height="8.8" viewBox="0 0 7 8.8"><defs><linearGradient id="dg" x1="0" y1="0" x2="1" y2="0"><stop offset="0" stop-color="#dcc070"/><stop offset="0.32" stop-color="#ffe968"/><stop offset="0.7" stop-color="#f0bd3a"/><stop offset="1" stop-color="#d89a28"/></linearGradient></defs><path d="M0.5 1.7v5.3c0 1.7 5.8 1.7 5.8 0v-5.3z" fill="url(#dg)" stroke="#b98d2c" stroke-width="0.4"/><ellipse cx="3.4" cy="1.7" rx="2.9" ry="1.15" fill="#fdf0a8" stroke="#c39a34" stroke-width="0.4"/></svg>
<span class="t" style="left:47.800000000000004px;top:180px;font-size:6.7px;line-height:8.71px;color:#111;letter-spacing:-0.314px;">DynamicsGPWarehouse</span>
<svg style="left:28.2px;top:190.8px" width="5" height="5" viewBox="0 0 5 5"><rect x="0.3" y="0.3" width="4.4" height="4.4" fill="#fff" stroke="#9a9a9a" stroke-width="0.55"/><path d="M1.2 2.5h2.6" stroke="#444" stroke-width="0.55"/><path d="M2.5 1.2v2.6" stroke="#444" stroke-width="0.55"/></svg>
<svg style="left:36.9px;top:188.9px" width="7" height="8.8" viewBox="0 0 7 8.8"><defs><linearGradient id="dg" x1="0" y1="0" x2="1" y2="0"><stop offset="0" stop-color="#dcc070"/><stop offset="0.32" stop-color="#ffe968"/><stop offset="0.7" stop-color="#f0bd3a"/><stop offset="1" stop-color="#d89a28"/></linearGradient></defs><path d="M0.5 1.7v5.3c0 1.7 5.8 1.7 5.8 0v-5.3z" fill="url(#dg)" stroke="#b98d2c" stroke-width="0.4"/><ellipse cx="3.4" cy="1.7" rx="2.9" ry="1.15" fill="#fdf0a8" stroke="#c39a34" stroke-width="0.4"/></svg>
<span class="t" style="left:47.800000000000004px;top:190px;font-size:6.7px;line-height:8.71px;color:#111;letter-spacing:-0.555px;">MSDI</span>
<svg style="left:28.2px;top:200.39999999999998px" width="5" height="5" viewBox="0 0 5 5"><rect x="0.3" y="0.3" width="4.4" height="4.4" fill="#fff" stroke="#9a9a9a" stroke-width="0.55"/><path d="M1.2 2.5h2.6" stroke="#444" stroke-width="0.55"/><path d="M2.5 1.2v2.6" stroke="#444" stroke-width="0.55"/></svg>
<svg style="left:36.9px;top:198.49999999999997px" width="7" height="8.8" viewBox="0 0 7 8.8"><defs><linearGradient id="dg" x1="0" y1="0" x2="1" y2="0"><stop offset="0" stop-color="#dcc070"/><stop offset="0.32" stop-color="#ffe968"/><stop offset="0.7" stop-color="#f0bd3a"/><stop offset="1" stop-color="#d89a28"/></linearGradient></defs><path d="M0.5 1.7v5.3c0 1.7 5.8 1.7 5.8 0v-5.3z" fill="url(#dg)" stroke="#b98d2c" stroke-width="0.4"/><ellipse cx="3.4" cy="1.7" rx="2.9" ry="1.15" fill="#fdf0a8" stroke="#c39a34" stroke-width="0.4"/></svg>
<span class="t" style="left:47.800000000000004px;top:199px;font-size:6.7px;line-height:8.71px;color:#111;letter-spacing:-0.165px;">NodeBuilder</span>
<svg style="left:28.2px;top:210.0px" width="5" height="5" viewBox="0 0 5 5"><rect x="0.3" y="0.3" width="4.4" height="4.4" fill="#fff" stroke="#9a9a9a" stroke-width="0.55"/><path d="M1.2 2.5h2.6" stroke="#444" stroke-width="0.55"/><path d="M2.5 1.2v2.6" stroke="#444" stroke-width="0.55"/></svg>
<svg style="left:36.9px;top:208.1px" width="7" height="8.8" viewBox="0 0 7 8.8"><defs><linearGradient id="dg" x1="0" y1="0" x2="1" y2="0"><stop offset="0" stop-color="#dcc070"/><stop offset="0.32" stop-color="#ffe968"/><stop offset="0.7" stop-color="#f0bd3a"/><stop offset="1" stop-color="#d89a28"/></linearGradient></defs><path d="M0.5 1.7v5.3c0 1.7 5.8 1.7 5.8 0v-5.3z" fill="url(#dg)" stroke="#b98d2c" stroke-width="0.4"/><ellipse cx="3.4" cy="1.7" rx="2.9" ry="1.15" fill="#fdf0a8" stroke="#c39a34" stroke-width="0.4"/></svg>
<span class="t" style="left:47.800000000000004px;top:209px;font-size:6.7px;line-height:8.71px;color:#111;letter-spacing:-0.787px;">OSLLC</span>
<svg style="left:28.2px;top:219.6px" width="5" height="5" viewBox="0 0 5 5"><rect x="0.3" y="0.3" width="4.4" height="4.4" fill="#fff" stroke="#9a9a9a" stroke-width="0.55"/><path d="M1.2 2.5h2.6" stroke="#444" stroke-width="0.55"/><path d="M2.5 1.2v2.6" stroke="#444" stroke-width="0.55"/></svg>
<svg style="left:36.9px;top:217.7px" width="7" height="8.8" viewBox="0 0 7 8.8"><defs><linearGradient id="dg" x1="0" y1="0" x2="1" y2="0"><stop offset="0" stop-color="#dcc070"/><stop offset="0.32" stop-color="#ffe968"/><stop offset="0.7" stop-color="#f0bd3a"/><stop offset="1" stop-color="#d89a28"/></linearGradient></defs><path d="M0.5 1.7v5.3c0 1.7 5.8 1.7 5.8 0v-5.3z" fill="url(#dg)" stroke="#b98d2c" stroke-width="0.4"/><ellipse cx="3.4" cy="1.7" rx="2.9" ry="1.15" fill="#fdf0a8" stroke="#c39a34" stroke-width="0.4"/></svg>
<span class="t" style="left:47.800000000000004px;top:219px;font-size:6.7px;line-height:8.71px;color:#111;letter-spacing:-0.315px;">ReportServer</span>
<svg style="left:28.2px;top:229.2px" width="5" height="5" viewBox="0 0 5 5"><rect x="0.3" y="0.3" width="4.4" height="4.4" fill="#fff" stroke="#9a9a9a" stroke-width="0.55"/><path d="M1.2 2.5h2.6" stroke="#444" stroke-width="0.55"/><path d="M2.5 1.2v2.6" stroke="#444" stroke-width="0.55"/></svg>
<svg style="left:36.9px;top:227.29999999999998px" width="7" height="8.8" viewBox="0 0 7 8.8"><defs><linearGradient id="dg" x1="0" y1="0" x2="1" y2="0"><stop offset="0" stop-color="#dcc070"/><stop offset="0.32" stop-color="#ffe968"/><stop offset="0.7" stop-color="#f0bd3a"/><stop offset="1" stop-color="#d89a28"/></linearGradient></defs><path d="M0.5 1.7v5.3c0 1.7 5.8 1.7 5.8 0v-5.3z" fill="url(#dg)" stroke="#b98d2c" stroke-width="0.4"/><ellipse cx="3.4" cy="1.7" rx="2.9" ry="1.15" fill="#fdf0a8" stroke="#c39a34" stroke-width="0.4"/></svg>
<span class="t" style="left:47.800000000000004px;top:228px;font-size:6.7px;line-height:8.71px;color:#111;letter-spacing:-0.301px;">ReportServerTempDB</span>
<svg style="left:28.2px;top:238.8px" width="5" height="5" viewBox="0 0 5 5"><rect x="0.3" y="0.3" width="4.4" height="4.4" fill="#fff" stroke="#9a9a9a" stroke-width="0.55"/><path d="M1.2 2.5h2.6" stroke="#444" stroke-width="0.55"/><path d="M2.5 1.2v2.6" stroke="#444" stroke-width="0.55"/></svg>
<svg style="left:36.9px;top:236.9px" width="7" height="8.8" viewBox="0 0 7 8.8"><defs><linearGradient id="dg" x1="0" y1="0" x2="1" y2="0"><stop offset="0" stop-color="#dcc070"/><stop offset="0.32" stop-color="#ffe968"/><stop offset="0.7" stop-color="#f0bd3a"/><stop offset="1" stop-color="#d89a28"/></linearGradient></defs><path d="M0.5 1.7v5.3c0 1.7 5.8 1.7 5.8 0v-5.3z" fill="url(#dg)" stroke="#b98d2c" stroke-width="0.4"/><ellipse cx="3.4" cy="1.7" rx="2.9" ry="1.15" fill="#fdf0a8" stroke="#c39a34" stroke-width="0.4"/></svg>
<span class="t" style="left:47.800000000000004px;top:238px;font-size:6.7px;line-height:8.71px;color:#111;letter-spacing:-0.588px;">SBM01</span>
<svg style="left:28.2px;top:248.39999999999998px" width="5" height="5" viewBox="0 0 5 5"><rect x="0.3" y="0.3" width="4.4" height="4.4" fill="#fff" stroke="#9a9a9a" stroke-width="0.55"/><path d="M1.2 2.5h2.6" stroke="#444" stroke-width="0.55"/><path d="M2.5 1.2v2.6" stroke="#444" stroke-width="0.55"/></svg>
<svg style="left:36.9px;top:246.49999999999997px" width="7" height="8.8" viewBox="0 0 7 8.8"><defs><linearGradient id="dg" x1="0" y1="0" x2="1" y2="0"><stop offset="0" stop-color="#dcc070"/><stop offset="0.32" stop-color="#ffe968"/><stop offset="0.7" stop-color="#f0bd3a"/><stop offset="1" stop-color="#d89a28"/></linearGradient></defs><path d="M0.5 1.7v5.3c0 1.7 5.8 1.7 5.8 0v-5.3z" fill="url(#dg)" stroke="#b98d2c" stroke-width="0.4"/><ellipse cx="3.4" cy="1.7" rx="2.9" ry="1.15" fill="#fdf0a8" stroke="#c39a34" stroke-width="0.4"/></svg>
<span class="t" style="left:47.800000000000004px;top:247px;font-size:6.7px;line-height:8.71px;color:#111;letter-spacing:-0.677px;">SCRIBEINTERNAL</span>
<svg style="left:28.2px;top:258.0px" width="5" height="5" viewBox="0 0 5 5"><rect x="0.3" y="0.3" width="4.4" height="4.4" fill="#fff" stroke="#9a9a9a" stroke-width="0.55"/><path d="M1.2 2.5h2.6" stroke="#444" stroke-width="0.55"/><path d="M2.5 1.2v2.6" stroke="#444" stroke-width="0.55"/></svg>
<svg style="left:36.9px;top:256.1px" width="7" height="8.8" viewBox="0 0 7 8.8"><defs><linearGradient id="dg" x1="0" y1="0" x2="1" y2="0"><stop offset="0" stop-color="#dcc070"/><stop offset="0.32" stop-color="#ffe968"/><stop offset="0.7" stop-color="#f0bd3a"/><stop offset="1" stop-color="#d89a28"/></linearGradient></defs><path d="M0.5 1.7v5.3c0 1.7 5.8 1.7 5.8 0v-5.3z" fill="url(#dg)" stroke="#b98d2c" stroke-width="0.4"/><ellipse cx="3.4" cy="1.7" rx="2.9" ry="1.15" fill="#fdf0a8" stroke="#c39a34" stroke-width="0.4"/></svg>
<span class="t" style="left:47.800000000000004px;top:257px;font-size:6.7px;line-height:8.71px;color:#111;letter-spacing:-0.307px;">Sikich</span>
<svg style="left:28.2px;top:267.59999999999997px" width="5" height="5" viewBox="0 0 5 5"><rect x="0.3" y="0.3" width="4.4" height="4.4" fill="#fff" stroke="#9a9a9a" stroke-width="0.55"/><path d="M1.2 2.5h2.6" stroke="#444" stroke-width="0.55"/><path d="M2.5 1.2v2.6" stroke="#444" stroke-width="0.55"/></svg>
<svg style="left:36.9px;top:265.7px" width="7" height="8.8" viewBox="0 0 7 8.8"><defs><linearGradient id="dg" x1="0" y1="0" x2="1" y2="0"><stop offset="0" stop-color="#dcc070"/><stop offset="0.32" stop-color="#ffe968"/><stop offset="0.7" stop-color="#f0bd3a"/><stop offset="1" stop-color="#d89a28"/></linearGradient></defs><path d="M0.5 1.7v5.3c0 1.7 5.8 1.7 5.8 0v-5.3z" fill="url(#dg)" stroke="#b98d2c" stroke-width="0.4"/><ellipse cx="3.4" cy="1.7" rx="2.9" ry="1.15" fill="#fdf0a8" stroke="#c39a34" stroke-width="0.4"/></svg>
<span class="t" style="left:47.800000000000004px;top:267px;font-size:6.7px;line-height:8.71px;color:#111;letter-spacing:-0.229px;">SmartConnect</span>
<svg style="left:28.2px;top:277.2px" width="5" height="5" viewBox="0 0 5 5"><rect x="0.3" y="0.3" width="4.4" height="4.4" fill="#fff" stroke="#9a9a9a" stroke-width="0.55"/><path d="M1.2 2.5h2.6" stroke="#444" stroke-width="0.55"/><path d="M2.5 1.2v2.6" stroke="#444" stroke-width="0.55"/></svg>
<svg style="left:36.9px;top:275.3px" width="7" height="8.8" viewBox="0 0 7 8.8"><defs><linearGradient id="dg" x1="0" y1="0" x2="1" y2="0"><stop offset="0" stop-color="#dcc070"/><stop offset="0.32" stop-color="#ffe968"/><stop offset="0.7" stop-color="#f0bd3a"/><stop offset="1" stop-color="#d89a28"/></linearGradient></defs><path d="M0.5 1.7v5.3c0 1.7 5.8 1.7 5.8 0v-5.3z" fill="url(#dg)" stroke="#b98d2c" stroke-width="0.4"/><ellipse cx="3.4" cy="1.7" rx="2.9" ry="1.15" fill="#fdf0a8" stroke="#c39a34" stroke-width="0.4"/></svg>
<span class="t" style="left:47.800000000000004px;top:276px;font-size:6.7px;line-height:8.71px;color:#111;letter-spacing:-0.834px;">THREE</span>
<svg style="left:28.2px;top:286.8px" width="5" height="5" viewBox="0 0 5 5"><rect x="0.3" y="0.3" width="4.4" height="4.4" fill="#fff" stroke="#9a9a9a" stroke-width="0.55"/><path d="M1.2 2.5h2.6" stroke="#444" stroke-width="0.55"/><path d="M2.5 1.2v2.6" stroke="#444" stroke-width="0.55"/></svg>
<svg style="left:36.9px;top:284.90000000000003px" width="7" height="8.8" viewBox="0 0 7 8.8"><defs><linearGradient id="dg" x1="0" y1="0" x2="1" y2="0"><stop offset="0" stop-color="#dcc070"/><stop offset="0.32" stop-color="#ffe968"/><stop offset="0.7" stop-color="#f0bd3a"/><stop offset="1" stop-color="#d89a28"/></linearGradient></defs><path d="M0.5 1.7v5.3c0 1.7 5.8 1.7 5.8 0v-5.3z" fill="url(#dg)" stroke="#b98d2c" stroke-width="0.4"/><ellipse cx="3.4" cy="1.7" rx="2.9" ry="1.15" fill="#fdf0a8" stroke="#c39a34" stroke-width="0.4"/></svg>
<span class="t" style="left:47.800000000000004px;top:286px;font-size:6.7px;line-height:8.71px;color:#111;letter-spacing:-0.527px;">TMFI</span>
<svg style="left:28.2px;top:296.4px" width="5" height="5" viewBox="0 0 5 5"><rect x="0.3" y="0.3" width="4.4" height="4.4" fill="#fff" stroke="#9a9a9a" stroke-width="0.55"/><path d="M1.2 2.5h2.6" stroke="#444" stroke-width="0.55"/><path d="M2.5 1.2v2.6" stroke="#444" stroke-width="0.55"/></svg>
<svg style="left:36.9px;top:294.5px" width="7" height="8.8" viewBox="0 0 7 8.8"><defs><linearGradient id="dg" x1="0" y1="0" x2="1" y2="0"><stop offset="0" stop-color="#dcc070"/><stop offset="0.32" stop-color="#ffe968"/><stop offset="0.7" stop-color="#f0bd3a"/><stop offset="1" stop-color="#d89a28"/></linearGradient></defs><path d="M0.5 1.7v5.3c0 1.7 5.8 1.7 5.8 0v-5.3z" fill="url(#dg)" stroke="#b98d2c" stroke-width="0.4"/><ellipse cx="3.4" cy="1.7" rx="2.9" ry="1.15" fill="#fdf0a8" stroke="#c39a34" stroke-width="0.4"/></svg>
<span class="t" style="left:47.800000000000004px;top:295px;font-size:6.7px;line-height:8.71px;color:#111;letter-spacing:-0.536px;">TWO</span>
<svg style="left:18.1px;top:306.0px" width="5" height="5" viewBox="0 0 5 5"><rect x="0.3" y="0.3" width="4.4" height="4.4" fill="#fff" stroke="#9a9a9a" stroke-width="0.55"/><path d="M1.2 2.5h2.6" stroke="#444" stroke-width="0.55"/><path d="M2.5 1.2v2.6" stroke="#444" stroke-width="0.55"/></svg>
<svg style="left:25.9px;top:305.1px" width="8.2" height="7" viewBox="0 0 8.2 7"><defs><linearGradient id="fg" x1="0" y1="0" x2="0.6" y2="1"><stop offset="0" stop-color="#fff6c4"/><stop offset="0.55" stop-color="#f3d162"/><stop offset="1" stop-color="#e2ad2c"/></linearGradient></defs><path d="M0.4 1.3q0-0.5 0.5-0.5h1.9l0.7 0.8h3.5q0.5 0 0.5 0.5v3.9h-7.1z" fill="url(#fg)" stroke="#bf9a38" stroke-width="0.4"/><path d="M0.4 6.15h7.2M7.55 2.2v4" stroke="#7d6526" stroke-width="0.5" fill="none" opacity="0.8"/></svg>
<span class="t" style="left:37.7px;top:305px;font-size:6.7px;line-height:8.71px;color:#111;letter-spacing:-0.209px;">Security</span>
<svg style="left:18.1px;top:315.59999999999997px" width="5" height="5" viewBox="0 0 5 5"><rect x="0.3" y="0.3" width="4.4" height="4.4" fill="#fff" stroke="#9a9a9a" stroke-width="0.55"/><path d="M1.2 2.5h2.6" stroke="#444" stroke-width="0.55"/><path d="M2.5 1.2v2.6" stroke="#444" stroke-width="0.55"/></svg>
<svg style="left:25.9px;top:314.7px" width="8.2" height="7" viewBox="0 0 8.2 7"><defs><linearGradient id="fg" x1="0" y1="0" x2="0.6" y2="1"><stop offset="0" stop-color="#fff6c4"/><stop offset="0.55" stop-color="#f3d162"/><stop offset="1" stop-color="#e2ad2c"/></linearGradient></defs><path d="M0.4 1.3q0-0.5 0.5-0.5h1.9l0.7 0.8h3.5q0.5 0 0.5 0.5v3.9h-7.1z" fill="url(#fg)" stroke="#bf9a38" stroke-width="0.4"/><path d="M0.4 6.15h7.2M7.55 2.2v4" stroke="#7d6526" stroke-width="0.5" fill="none" opacity="0.8"/></svg>
<span class="t" style="left:37.7px;top:315px;font-size:6.7px;line-height:8.71px;color:#111;letter-spacing:-0.302px;">Server Objects</span>
<svg style="left:18.1px;top:325.2px" width="5" height="5" viewBox="0 0 5 5"><rect x="0.3" y="0.3" width="4.4" height="4.4" fill="#fff" stroke="#9a9a9a" stroke-width="0.55"/><path d="M1.2 2.5h2.6" stroke="#444" stroke-width="0.55"/><path d="M2.5 1.2v2.6" stroke="#444" stroke-width="0.55"/></svg>
<svg style="left:25.9px;top:324.3px" width="8.2" height="7" viewBox="0 0 8.2 7"><defs><linearGradient id="fg" x1="0" y1="0" x2="0.6" y2="1"><stop offset="0" stop-color="#fff6c4"/><stop offset="0.55" stop-color="#f3d162"/><stop offset="1" stop-color="#e2ad2c"/></linearGradient></defs><path d="M0.4 1.3q0-0.5 0.5-0.5h1.9l0.7 0.8h3.5q0.5 0 0.5 0.5v3.9h-7.1z" fill="url(#fg)" stroke="#bf9a38" stroke-width="0.4"/><path d="M0.4 6.15h7.2M7.55 2.2v4" stroke="#7d6526" stroke-width="0.5" fill="none" opacity="0.8"/></svg>
<span class="t" style="left:37.7px;top:324px;font-size:6.7px;line-height:8.71px;color:#111;letter-spacing:-0.145px;">Replication</span>
<svg style="left:18.1px;top:334.8px" width="5" height="5" viewBox="0 0 5 5"><rect x="0.3" y="0.3" width="4.4" height="4.4" fill="#fff" stroke="#9a9a9a" stroke-width="0.55"/><path d="M1.2 2.5h2.6" stroke="#444" stroke-width="0.55"/><path d="M2.5 1.2v2.6" stroke="#444" stroke-width="0.55"/></svg>
<svg style="left:25.9px;top:333.90000000000003px" width="8.2" height="7" viewBox="0 0 8.2 7"><defs><linearGradient id="fg" x1="0" y1="0" x2="0.6" y2="1"><stop offset="0" stop-color="#fff6c4"/><stop offset="0.55" stop-color="#f3d162"/><stop offset="1" stop-color="#e2ad2c"/></linearGradient></defs><path d="M0.4 1.3q0-0.5 0.5-0.5h1.9l0.7 0.8h3.5q0.5 0 0.5 0.5v3.9h-7.1z" fill="url(#fg)" stroke="#bf9a38" stroke-width="0.4"/><path d="M0.4 6.15h7.2M7.55 2.2v4" stroke="#7d6526" stroke-width="0.5" fill="none" opacity="0.8"/></svg>
<span class="t" style="left:37.7px;top:334px;font-size:6.7px;line-height:8.71px;color:#111;letter-spacing:-0.103px;">AlwaysOn High Availability</span>
<svg style="left:18.1px;top:344.4px" width="5" height="5" viewBox="0 0 5 5"><rect x="0.3" y="0.3" width="4.4" height="4.4" fill="#fff" stroke="#9a9a9a" stroke-width="0.55"/><path d="M1.2 2.5h2.6" stroke="#444" stroke-width="0.55"/><path d="M2.5 1.2v2.6" stroke="#444" stroke-width="0.55"/></svg>
<svg style="left:25.9px;top:343.5px" width="8.2" height="7" viewBox="0 0 8.2 7"><defs><linearGradient id="fg" x1="0" y1="0" x2="0.6" y2="1"><stop offset="0" stop-color="#fff6c4"/><stop offset="0.55" stop-color="#f3d162"/><stop offset="1" stop-color="#e2ad2c"/></linearGradient></defs><path d="M0.4 1.3q0-0.5 0.5-0.5h1.9l0.7 0.8h3.5q0.5 0 0.5 0.5v3.9h-7.1z" fill="url(#fg)" stroke="#bf9a38" stroke-width="0.4"/><path d="M0.4 6.15h7.2M7.55 2.2v4" stroke="#7d6526" stroke-width="0.5" fill="none" opacity="0.8"/></svg>
<span class="t" style="left:37.7px;top:343px;font-size:6.7px;line-height:8.71px;color:#111;letter-spacing:-0.105px;">Management</span>
<svg style="left:18.1px;top:354.0px" width="5" height="5" viewBox="0 0 5 5"><rect x="0.3" y="0.3" width="4.4" height="4.4" fill="#fff" stroke="#9a9a9a" stroke-width="0.55"/><path d="M1.2 2.5h2.6" stroke="#444" stroke-width="0.55"/><path d="M2.5 1.2v2.6" stroke="#444" stroke-width="0.55"/></svg>
<svg style="left:25.9px;top:353.1px" width="8.2" height="7" viewBox="0 0 8.2 7"><defs><linearGradient id="fg" x1="0" y1="0" x2="0.6" y2="1"><stop offset="0" stop-color="#fff6c4"/><stop offset="0.55" stop-color="#f3d162"/><stop offset="1" stop-color="#e2ad2c"/></linearGradient></defs><path d="M0.4 1.3q0-0.5 0.5-0.5h1.9l0.7 0.8h3.5q0.5 0 0.5 0.5v3.9h-7.1z" fill="url(#fg)" stroke="#bf9a38" stroke-width="0.4"/><path d="M0.4 6.15h7.2M7.55 2.2v4" stroke="#7d6526" stroke-width="0.5" fill="none" opacity="0.8"/></svg>
<span class="t" style="left:37.7px;top:353px;font-size:6.7px;line-height:8.71px;color:#111;letter-spacing:-0.219px;">Integration Services Catalogs</span>
<svg style="left:18.1px;top:363.6px" width="5" height="5" viewBox="0 0 5 5"><rect x="0.3" y="0.3" width="4.4" height="4.4" fill="#fff" stroke="#9a9a9a" stroke-width="0.55"/><path d="M1.2 2.5h2.6" stroke="#444" stroke-width="0.55"/><path d="M2.5 1.2v2.6" stroke="#444" stroke-width="0.55"/></svg>
<div style="left:26.3px;top:362.50000000000006px;width:6.4px;height:6.4px;background:#eef0f6;border:0.5px solid #8a94b0;box-sizing:border-box"></div>
<div style="left:27.3px;top:363.7px;width:2.2px;height:1.6px;background:#9aa6c8;"></div>
<div style="left:29.7px;top:365.3px;width:4.6px;height:4.6px;background:#d9473c;border-radius:2.3px"></div>
<div style="left:30.9px;top:363.2px;width:2px;height:2.6px;background:#d9473c;border-radius:1px"></div>
<span class="t" style="left:37.7px;top:363px;font-size:6.7px;line-height:8.71px;color:#111;letter-spacing:-0.322px;">SQL Server Agent</span>
<div style="left:245.6px;top:67.3px;width:127.6px;height:10.6px;background:linear-gradient(#fffbea,#fdf1c0 55%,#fdecab);border-radius:1px 1px 0 0"></div>
<span class="t" style="left:248px;top:70px;font-size:6.7px;line-height:8.71px;color:#1a1a1a;letter-spacing:-0.353px;">SQLQuery4.sql - E...ENLT.TWO (sa (57))*</span>
<svg style="left:365.2px;top:70.8px" width="5" height="5" viewBox="0 0 5 5"><path d="M0.8 0.8l3.4 3.4M4.2 0.8l-3.4 3.4" stroke="#5a5340" stroke-width="0.7"/></svg>
<span class="t" style="left:375.8px;top:70px;font-size:6.7px;line-height:8.71px;color:#e8ecf5;letter-spacing:-0.306px;">SQLQuery2.sql - EWI...LT.Sikich (sa (55))*</span>
<svg style="left:1002.3px;top:72.3px" width="4.0" height="2.4" viewBox="0 0 4 2.4"><path d="M0.4 0.2h3.2l-1.6 1.9z" fill="#dfe5f2"/></svg>
<div style="left:245.6px;top:77.4px;width:764.1999999999999px;height:461.6px;background:#fff;"></div>
<div style="left:245.6px;top:77px;width:764.1999999999999px;height:3px;background:linear-gradient(#fdecab 0,#fdeeb4 2px,#fef5d4 3px);"></div>
<div style="left:245.6px;top:80.2px;width:764.1999999999999px;height:219.0px;background:#fff;"></div>
<div style="left:245.6px;top:80.2px;width:10.4px;height:219.0px;background:linear-gradient(90deg,#ececec,#f3f3f3);"></div>
<svg style="left:255px;top:80.2px" width="5" height="154" viewBox="0 0 5 154"><rect x="1" y="0" width="2.7" height="153.4" fill="#f5e360"/></svg>
<div style="left:263px;top:131.498px;width:733.6px;height:85.33px;background:#f5f7fa;"></div>
<div style="left:265.2px;top:131.498px;width:153px;height:8.533px;background:#dde5ec;"></div>
<div style="left:263.4px;top:139.93099999999998px;width:495.6px;height:8.533px;background:#dde5ec;"></div>
<div style="left:263.4px;top:148.464px;width:58.6px;height:68.264px;background:#dde5ec;"></div>
<div style="left:262.4px;top:86.2px;width:0.5px;height:37.5452px;background:#c4c4c4;"></div>
<div style="left:262.4px;top:120.732px;width:1.6px;height:0.5px;background:#c4c4c4;"></div>
<div style="left:262.4px;top:137.398px;width:0.5px;height:87.8899px;background:#c4c4c4;"></div>
<div style="left:262.4px;top:221.328px;width:1.6px;height:0.5px;background:#c4c4c4;"></div>
<svg style="left:260.3px;top:82.4px" width="4.6" height="4.6" viewBox="0 0 4.6 4.6"><rect x="0.3" y="0.3" width="4" height="4" fill="#fff" stroke="#9a9a9a" stroke-width="0.5"/><path d="M1.1 2.3h2.4" stroke="#555" stroke-width="0.5"/></svg>
<svg style="left:260.3px;top:133.59799999999998px" width="4.6" height="4.6" viewBox="0 0 4.6 4.6"><rect x="0.3" y="0.3" width="4" height="4" fill="#fff" stroke="#9a9a9a" stroke-width="0.5"/><path d="M1.1 2.3h2.4" stroke="#555" stroke-width="0.5"/></svg>
<span class="m" style="left:265.6px;top:82px;font-size:6.5px;line-height:8.45px;color:#1818d8;letter-spacing:-0.181px;">SELECT</span>
<span class="m" style="left:280.48px;top:91px;font-size:6.5px;line-height:8.45px;color:#808080;letter-spacing:-0.186px;">*</span>
<span class="m" style="left:265.6px;top:99px;font-size:6.5px;line-height:8.45px;color:#1818d8;letter-spacing:-0.182px;">FROM</span>
<span class="m" style="left:280.48px;top:108px;font-size:6.5px;line-height:8.45px;color:#1e1e1e;letter-spacing:-0.182px;">SOP10101</span>
<span class="m" style="left:265.6px;top:116px;font-size:6.5px;line-height:8.45px;color:#1818d8;letter-spacing:-0.183px;">WHERE</span>
<span class="m" style="left:287.92px;top:116px;font-size:6.5px;line-height:8.45px;color:#1e1e1e;letter-spacing:-0.182px;">CURRNIDX</span>
<svg style="left:287.92px;top:120.99849999999998px" width="29.8" height="2.4" viewBox="0 0 29.8 2.4"><path d="M0 1.2 l0.9 -1.0 l0.9 1.0 l0.9 -1.0 l0.9 1.0 l0.9 -1.0 l0.9 1.0 l0.9 -1.0 l0.9 1.0 l0.9 -1.0 l0.9 1.0 l0.9 -1.0 l0.9 1.0 l0.9 -1.0 l0.9 1.0 l0.9 -1.0 l0.9 1.0 l0.9 -1.0 l0.9 1.0 l0.9 -1.0 l0.9 1.0 l0.9 -1.0 l0.9 1.0 l0.9 -1.0 l0.9 1.0 l0.9 -1.0 l0.9 1.0 l0.9 -1.0 l0.9 1.0 l0.9 -1.0 l0.9 1.0 l0.9 -1.0 l0.9 1.0 l0.9 -1.0" stroke="#e03030" stroke-width="0.45" fill="none"/></svg>
<span class="m" style="left:321.40000000000003px;top:116px;font-size:6.5px;line-height:8.45px;color:#808080;letter-spacing:-0.186px;">IN</span>
<span class="m" style="left:265.6px;top:133px;font-size:6.5px;line-height:8.45px;color:#1818d8;letter-spacing:-0.181px;">SELECT</span>
<svg style="left:265.6px;top:138.0645px" width="22.3" height="2.4" viewBox="0 0 22.3 2.4"><path d="M0 1.2 l0.9 -1.0 l0.9 1.0 l0.9 -1.0 l0.9 1.0 l0.9 -1.0 l0.9 1.0 l0.9 -1.0 l0.9 1.0 l0.9 -1.0 l0.9 1.0 l0.9 -1.0 l0.9 1.0 l0.9 -1.0 l0.9 1.0 l0.9 -1.0 l0.9 1.0 l0.9 -1.0 l0.9 1.0 l0.9 -1.0 l0.9 1.0 l0.9 -1.0 l0.9 1.0 l0.9 -1.0 l0.9 1.0" stroke="#e03030" stroke-width="0.45" fill="none"/></svg>
<span class="m" style="left:291.64000000000004px;top:133px;font-size:6.5px;line-height:8.45px;color:#808080;letter-spacing:-0.186px;">*</span>
<span class="m" style="left:299.08000000000004px;top:133px;font-size:6.5px;line-height:8.45px;color:#1818d8;letter-spacing:-0.182px;">FROM</span>
<span class="m" style="left:317.68px;top:133px;font-size:6.5px;line-height:8.45px;color:#1e1e1e;letter-spacing:-0.182px;">GL00105</span>
<span class="m" style="left:347.44000000000005px;top:133px;font-size:6.5px;line-height:8.45px;color:#1818d8;letter-spacing:-0.183px;">WHERE</span>
<span class="m" style="left:369.76000000000005px;top:133px;font-size:6.5px;line-height:8.45px;color:#1e1e1e;letter-spacing:-0.182px;">ACTNUMST</span>
<span class="m" style="left:403.24px;top:133px;font-size:6.5px;line-height:8.45px;color:#808080;letter-spacing:-0.181px;">IN(</span>
<span class="m" style="left:265.6px;top:142px;font-size:6.5px;line-height:8.45px;color:#e01414;letter-spacing:-0.181px;">&#x27;000-1100-00&#x27;</span>
<span class="m" style="left:265.6px;top:150px;font-size:6.5px;line-height:8.45px;color:#808080;letter-spacing:-0.186px;">,</span>
<span class="m" style="left:269.32000000000005px;top:150px;font-size:6.5px;line-height:8.45px;color:#e01414;letter-spacing:-0.181px;">&#x27;000-1110-00&#x27;</span>
<span class="m" style="left:265.6px;top:159px;font-size:6.5px;line-height:8.45px;color:#808080;letter-spacing:-0.186px;">,</span>
<span class="m" style="left:269.32000000000005px;top:159px;font-size:6.5px;line-height:8.45px;color:#e01414;letter-spacing:-0.181px;">&#x27;000-1120-00&#x27;</span>
<span class="m" style="left:265.6px;top:167px;font-size:6.5px;line-height:8.45px;color:#808080;letter-spacing:-0.186px;">,</span>
<span class="m" style="left:269.32000000000005px;top:167px;font-size:6.5px;line-height:8.45px;color:#e01414;letter-spacing:-0.181px;">&#x27;000-1130-00&#x27;</span>
<span class="m" style="left:265.6px;top:176px;font-size:6.5px;line-height:8.45px;color:#808080;letter-spacing:-0.186px;">,</span>
<span class="m" style="left:269.32000000000005px;top:176px;font-size:6.5px;line-height:8.45px;color:#e01414;letter-spacing:-0.181px;">&#x27;000-1140-00&#x27;</span>
<span class="m" style="left:265.6px;top:184px;font-size:6.5px;line-height:8.45px;color:#808080;letter-spacing:-0.186px;">,</span>
<span class="m" style="left:269.32000000000005px;top:184px;font-size:6.5px;line-height:8.45px;color:#e01414;letter-spacing:-0.181px;">&#x27;000-1200-00&#x27;</span>
<span class="m" style="left:265.6px;top:193px;font-size:6.5px;line-height:8.45px;color:#808080;letter-spacing:-0.186px;">,</span>
<span class="m" style="left:269.32000000000005px;top:193px;font-size:6.5px;line-height:8.45px;color:#e01414;letter-spacing:-0.181px;">&#x27;000-1205-00&#x27;</span>
<span class="m" style="left:265.6px;top:202px;font-size:6.5px;line-height:8.45px;color:#808080;letter-spacing:-0.186px;">,</span>
<span class="m" style="left:269.32000000000005px;top:202px;font-size:6.5px;line-height:8.45px;color:#e01414;letter-spacing:-0.181px;">&#x27;000-1210-00&#x27;</span>
<span class="m" style="left:265.6px;top:210px;font-size:6.5px;line-height:8.45px;color:#808080;letter-spacing:-0.186px;">,</span>
<span class="m" style="left:269.32000000000005px;top:210px;font-size:6.5px;line-height:8.45px;color:#e01414;letter-spacing:-0.181px;">&#x27;000-1220-00&#x27;</span>
<span class="m" style="left:265.6px;top:219px;font-size:6.5px;line-height:8.45px;color:#808080;letter-spacing:-0.186px;">)</span>
<div style="left:1000.1px;top:80.2px;width:9.699999999999932px;height:219.0px;background:#f0f0f0;"></div>
<div style="left:1000.1px;top:80.2px;width:9.699999999999932px;height:8.3px;background:#dadada;"></div>
<svg style="left:1001.9px;top:80.8px" width="6" height="7" viewBox="0 0 6 7"><path d="M3 0.4l2 2h-4zM3 6.6l2-2h-4z" fill="#333"/><path d="M0.6 3.1h4.8v0.8h-4.8z" fill="#333"/></svg>
<svg style="left:1002.7px;top:91.6px" width="4.6" height="3" viewBox="0 0 4.6 3"><path d="M0.5 2.5l1.8-1.8 1.8 1.8" stroke="#9a9a9a" stroke-width="0.6" fill="none"/></svg>
<div style="left:1000.1px;top:97.8px;width:9.699999999999932px;height:115.4px;background:#cdcdcd;"></div>
<svg style="left:1002.7px;top:292.6px" width="4.6" height="3" viewBox="0 0 4.6 3"><path d="M0.5 0.5l1.8 1.8 1.8-1.8" stroke="#7a7a7a" stroke-width="0.6" fill="none"/></svg>
<div style="left:245.6px;top:299.2px;width:764.1999999999999px;height:24.2px;background:#f0f0f0;"></div>
<div style="left:245.6px;top:299.7px;width:33.4px;height:9px;background:#fbfbfb;"></div>
<span class="t" style="left:247.4px;top:300px;font-size:6.6px;line-height:8.58px;color:#111;letter-spacing:-0.541px;">100 %</span>
<svg style="left:272.7px;top:303.1px" width="3.6" height="2.16" viewBox="0 0 4 2.4"><path d="M0.4 0.2h3.2l-1.6 1.9z" fill="#222"/></svg>
<div style="left:1000.1px;top:299.8px;width:8.899999999999931px;height:8.6px;background:#fff;"></div>
<div style="left:990.5px;top:301px;width:0.5px;height:5px;background:#d5d5d5;"></div>
<div style="left:245.6px;top:309.4px;width:39px;height:14px;background:#f8f8f8;"></div>
<svg style="left:250.4px;top:313.6px" width="6.8" height="6" viewBox="0 0 6.8 6"><rect x="0.3" y="0.3" width="6.2" height="5.4" fill="#dfe7f5" stroke="#6d7fa8" stroke-width="0.6"/><path d="M0.3 2h6.2M0.3 3.8h6.2M2.4 0.3v5.4M4.5 0.3v5.4" stroke="#8b9cc2" stroke-width="0.4"/></svg>
<span class="t" style="left:261.6px;top:313px;font-size:6.6px;line-height:8.58px;color:#111;letter-spacing:-0.514px;">Results</span>
<svg style="left:286.6px;top:313px" width="8.4" height="7.4" viewBox="0 0 8.4 7.4"><path d="M0.6 0.6h3.6l1.4 1.4v4.8h-5z" fill="#fff" stroke="#8e9ab5" stroke-width="0.5"/><path d="M3.4 3.4h4.4v3.6h-4.4z" fill="#f2e6b8" stroke="#a89a6a" stroke-width="0.45"/></svg>
<span class="t" style="left:298.2px;top:313px;font-size:6.6px;line-height:8.58px;color:#111;letter-spacing:-0.633px;">Messages</span>
<div style="left:245.6px;top:323.3px;width:764.1999999999999px;height:201.5px;background:#fff;"></div>
<div style="left:245.6px;top:323.0px;width:764.1999999999999px;height:0.6px;background:#e6e6e6;"></div>
<div style="left:1006.6px;top:323.3px;width:0.6px;height:199px;background:#d9d9d9;"></div>
<div style="left:1007.2px;top:323.3px;width:2.6px;height:199px;background:#f4f4f4;"></div>
<div style="left:245.6px;top:521.8px;width:764.1999999999999px;height:1px;background:#cdd1db;"></div>
<div style="left:245.6px;top:522.8px;width:764.1999999999999px;height:1.9px;background:#fdfdfb;"></div>
<div style="left:245.6px;top:343.16499999999996px;width:380.4px;height:0.5px;background:#f5f5f5;"></div>
<div style="left:245.6px;top:353.195px;width:380.4px;height:0.5px;background:#f5f5f5;"></div>
<div style="left:245.6px;top:363.22499999999997px;width:380.4px;height:0.5px;background:#f5f5f5;"></div>
<div style="left:245.6px;top:373.255px;width:380.4px;height:0.5px;background:#f5f5f5;"></div>
<div style="left:245.6px;top:383.28499999999997px;width:380.4px;height:0.5px;background:#f5f5f5;"></div>
<div style="left:245.6px;top:393.315px;width:380.4px;height:0.5px;background:#f5f5f5;"></div>
<div style="left:245.6px;top:403.34499999999997px;width:380.4px;height:0.5px;background:#f5f5f5;"></div>
<div style="left:245.6px;top:413.375px;width:380.4px;height:0.5px;background:#f5f5f5;"></div>
<div style="left:245.6px;top:423.405px;width:380.4px;height:0.5px;background:#f5f5f5;"></div>
<div style="left:298.75px;top:324.3px;width:0.5px;height:99.35499999999996px;background:#f5f5f5;"></div>
<div style="left:346.75px;top:324.3px;width:0.5px;height:99.35499999999996px;background:#f5f5f5;"></div>
<div style="left:394.75px;top:324.3px;width:0.5px;height:99.35499999999996px;background:#f5f5f5;"></div>
<div style="left:442.75px;top:324.3px;width:0.5px;height:99.35499999999996px;background:#f5f5f5;"></div>
<div style="left:490.75px;top:324.3px;width:0.5px;height:99.35499999999996px;background:#f5f5f5;"></div>
<div style="left:538.75px;top:324.3px;width:0.5px;height:99.35499999999996px;background:#f5f5f5;"></div>
<div style="left:579.75px;top:324.3px;width:0.5px;height:99.35499999999996px;background:#f5f5f5;"></div>
<div style="left:625.75px;top:324.3px;width:0.5px;height:99.35499999999996px;background:#f5f5f5;"></div>
<div style="left:264.75px;top:324.3px;width:0.5px;height:99.35499999999996px;background:#f5f5f5;"></div>
<div style="left:265px;top:333.385px;width:34px;height:90.27px;background:#9fcbf0;"></div>
<div style="left:265px;top:343.11499999999995px;width:34px;height:0.6px;background:#b4d6f3;"></div>
<div style="left:265px;top:353.145px;width:34px;height:0.6px;background:#b4d6f3;"></div>
<div style="left:265px;top:363.17499999999995px;width:34px;height:0.6px;background:#b4d6f3;"></div>
<div style="left:265px;top:373.205px;width:34px;height:0.6px;background:#b4d6f3;"></div>
<div style="left:265px;top:383.23499999999996px;width:34px;height:0.6px;background:#b4d6f3;"></div>
<div style="left:265px;top:393.265px;width:34px;height:0.6px;background:#b4d6f3;"></div>
<div style="left:265px;top:403.29499999999996px;width:34px;height:0.6px;background:#b4d6f3;"></div>
<div style="left:265px;top:413.325px;width:34px;height:0.6px;background:#b4d6f3;"></div>
<div style="left:265px;top:333.385px;width:34px;height:10.03px;background:#a1ccf0;border:0.5px solid #86b4e2;box-sizing:border-box"></div>
<span class="t" style="left:268.2px;top:324px;font-size:6.6px;line-height:8.58px;color:#222;letter-spacing:-0.636px;-webkit-text-stroke:0;">ACTINDX</span>
<span class="t" style="left:302.2px;top:324px;font-size:6.6px;line-height:8.58px;color:#222;letter-spacing:-0.690px;-webkit-text-stroke:0;">ACTNUMBR_1</span>
<span class="t" style="left:350.2px;top:324px;font-size:6.6px;line-height:8.58px;color:#222;letter-spacing:-0.570px;-webkit-text-stroke:0;">ACTNUMBR_2</span>
<span class="t" style="left:398.2px;top:324px;font-size:6.6px;line-height:8.58px;color:#222;letter-spacing:-0.510px;-webkit-text-stroke:0;">ACTNUMBR_3</span>
<span class="t" style="left:446.2px;top:324px;font-size:6.6px;line-height:8.58px;color:#222;letter-spacing:-0.530px;-webkit-text-stroke:0;">ACTNUMBR_4</span>
<span class="t" style="left:494.2px;top:324px;font-size:6.6px;line-height:8.58px;color:#222;letter-spacing:-0.550px;-webkit-text-stroke:0;">ACTNUMBR_5</span>
<span class="t" style="left:542.2px;top:324px;font-size:6.6px;line-height:8.58px;color:#222;letter-spacing:-0.530px;-webkit-text-stroke:0;">ACTNUMST</span>
<span class="t" style="left:583.2px;top:324px;font-size:6.6px;line-height:8.58px;color:#222;letter-spacing:-0.531px;-webkit-text-stroke:0;">DEX_ROW_ID</span>
<span class="t" style="left:252.2px;top:335px;font-size:6.6px;line-height:8.58px;color:#333;letter-spacing:-0.472px;-webkit-text-stroke:0;">1</span>
<span class="t" style="left:269.4px;top:335px;font-size:6.6px;line-height:8.58px;color:#10203a;letter-spacing:-0.472px;-webkit-text-stroke:0;">1</span>
<span class="t" style="left:303.2px;top:335px;font-size:6.6px;line-height:8.58px;color:#1a1a1a;letter-spacing:-0.472px;-webkit-text-stroke:0;">000</span>
<span class="t" style="left:351.2px;top:335px;font-size:6.6px;line-height:8.58px;color:#1a1a1a;letter-spacing:-0.347px;-webkit-text-stroke:0;">1100</span>
<span class="t" style="left:399.2px;top:335px;font-size:6.6px;line-height:8.58px;color:#1a1a1a;letter-spacing:-0.472px;-webkit-text-stroke:0;">00</span>
<span class="t" style="left:542.8px;top:335px;font-size:6.6px;line-height:8.58px;color:#1a1a1a;letter-spacing:-0.437px;-webkit-text-stroke:0;">000-1100-00</span>
<span class="t" style="left:583.6px;top:335px;font-size:6.6px;line-height:8.58px;color:#1a1a1a;letter-spacing:-0.472px;-webkit-text-stroke:0;">1</span>
<span class="t" style="left:252.2px;top:345px;font-size:6.6px;line-height:8.58px;color:#333;letter-spacing:-0.472px;-webkit-text-stroke:0;">2</span>
<span class="t" style="left:269.4px;top:345px;font-size:6.6px;line-height:8.58px;color:#10203a;letter-spacing:-0.472px;-webkit-text-stroke:0;">2</span>
<span class="t" style="left:303.2px;top:345px;font-size:6.6px;line-height:8.58px;color:#1a1a1a;letter-spacing:-0.472px;-webkit-text-stroke:0;">000</span>
<span class="t" style="left:351.2px;top:345px;font-size:6.6px;line-height:8.58px;color:#1a1a1a;letter-spacing:-0.226px;-webkit-text-stroke:0;">1110</span>
<span class="t" style="left:399.2px;top:345px;font-size:6.6px;line-height:8.58px;color:#1a1a1a;letter-spacing:-0.472px;-webkit-text-stroke:0;">00</span>
<span class="t" style="left:542.8px;top:345px;font-size:6.6px;line-height:8.58px;color:#1a1a1a;letter-spacing:-0.393px;-webkit-text-stroke:0;">000-1110-00</span>
<span class="t" style="left:583.6px;top:345px;font-size:6.6px;line-height:8.58px;color:#1a1a1a;letter-spacing:-0.472px;-webkit-text-stroke:0;">2</span>
<span class="t" style="left:252.2px;top:355px;font-size:6.6px;line-height:8.58px;color:#333;letter-spacing:-0.472px;-webkit-text-stroke:0;">3</span>
<span class="t" style="left:269.4px;top:355px;font-size:6.6px;line-height:8.58px;color:#10203a;letter-spacing:-0.472px;-webkit-text-stroke:0;">3</span>
<span class="t" style="left:303.2px;top:355px;font-size:6.6px;line-height:8.58px;color:#1a1a1a;letter-spacing:-0.472px;-webkit-text-stroke:0;">000</span>
<span class="t" style="left:351.2px;top:355px;font-size:6.6px;line-height:8.58px;color:#1a1a1a;letter-spacing:-0.347px;-webkit-text-stroke:0;">1120</span>
<span class="t" style="left:399.2px;top:355px;font-size:6.6px;line-height:8.58px;color:#1a1a1a;letter-spacing:-0.472px;-webkit-text-stroke:0;">00</span>
<span class="t" style="left:542.8px;top:355px;font-size:6.6px;line-height:8.58px;color:#1a1a1a;letter-spacing:-0.437px;-webkit-text-stroke:0;">000-1120-00</span>
<span class="t" style="left:583.6px;top:355px;font-size:6.6px;line-height:8.58px;color:#1a1a1a;letter-spacing:-0.472px;-webkit-text-stroke:0;">3</span>
<span class="t" style="left:252.2px;top:365px;font-size:6.6px;line-height:8.58px;color:#333;letter-spacing:-0.472px;-webkit-text-stroke:0;">4</span>
<span class="t" style="left:269.4px;top:365px;font-size:6.6px;line-height:8.58px;color:#10203a;letter-spacing:-0.472px;-webkit-text-stroke:0;">4</span>
<span class="t" style="left:303.2px;top:365px;font-size:6.6px;line-height:8.58px;color:#1a1a1a;letter-spacing:-0.472px;-webkit-text-stroke:0;">000</span>
<span class="t" style="left:351.2px;top:365px;font-size:6.6px;line-height:8.58px;color:#1a1a1a;letter-spacing:-0.347px;-webkit-text-stroke:0;">1130</span>
<span class="t" style="left:399.2px;top:365px;font-size:6.6px;line-height:8.58px;color:#1a1a1a;letter-spacing:-0.472px;-webkit-text-stroke:0;">00</span>
<span class="t" style="left:542.8px;top:365px;font-size:6.6px;line-height:8.58px;color:#1a1a1a;letter-spacing:-0.437px;-webkit-text-stroke:0;">000-1130-00</span>
<span class="t" style="left:583.6px;top:365px;font-size:6.6px;line-height:8.58px;color:#1a1a1a;letter-spacing:-0.472px;-webkit-text-stroke:0;">4</span>
<span class="t" style="left:252.2px;top:375px;font-size:6.6px;line-height:8.58px;color:#333;letter-spacing:-0.472px;-webkit-text-stroke:0;">5</span>
<span class="t" style="left:269.4px;top:375px;font-size:6.6px;line-height:8.58px;color:#10203a;letter-spacing:-0.472px;-webkit-text-stroke:0;">5</span>
<span class="t" style="left:303.2px;top:375px;font-size:6.6px;line-height:8.58px;color:#1a1a1a;letter-spacing:-0.472px;-webkit-text-stroke:0;">000</span>
<span class="t" style="left:351.2px;top:375px;font-size:6.6px;line-height:8.58px;color:#1a1a1a;letter-spacing:-0.347px;-webkit-text-stroke:0;">1140</span>
<span class="t" style="left:399.2px;top:375px;font-size:6.6px;line-height:8.58px;color:#1a1a1a;letter-spacing:-0.472px;-webkit-text-stroke:0;">00</span>
<span class="t" style="left:542.8px;top:375px;font-size:6.6px;line-height:8.58px;color:#1a1a1a;letter-spacing:-0.437px;-webkit-text-stroke:0;">000-1140-00</span>
<span class="t" style="left:583.6px;top:375px;font-size:6.6px;line-height:8.58px;color:#1a1a1a;letter-spacing:-0.472px;-webkit-text-stroke:0;">5</span>
<span class="t" style="left:252.2px;top:385px;font-size:6.6px;line-height:8.58px;color:#333;letter-spacing:-0.472px;-webkit-text-stroke:0;">6</span>
<span class="t" style="left:269.4px;top:385px;font-size:6.6px;line-height:8.58px;color:#10203a;letter-spacing:-0.472px;-webkit-text-stroke:0;">6</span>
<span class="t" style="left:303.2px;top:385px;font-size:6.6px;line-height:8.58px;color:#1a1a1a;letter-spacing:-0.472px;-webkit-text-stroke:0;">000</span>
<span class="t" style="left:351.2px;top:385px;font-size:6.6px;line-height:8.58px;color:#1a1a1a;letter-spacing:-0.468px;-webkit-text-stroke:0;">1200</span>
<span class="t" style="left:399.2px;top:385px;font-size:6.6px;line-height:8.58px;color:#1a1a1a;letter-spacing:-0.472px;-webkit-text-stroke:0;">00</span>
<span class="t" style="left:542.8px;top:385px;font-size:6.6px;line-height:8.58px;color:#1a1a1a;letter-spacing:-0.482px;-webkit-text-stroke:0;">000-1200-00</span>
<span class="t" style="left:583.6px;top:385px;font-size:6.6px;line-height:8.58px;color:#1a1a1a;letter-spacing:-0.472px;-webkit-text-stroke:0;">6</span>
<span class="t" style="left:252.2px;top:395px;font-size:6.6px;line-height:8.58px;color:#333;letter-spacing:-0.472px;-webkit-text-stroke:0;">7</span>
<span class="t" style="left:269.4px;top:395px;font-size:6.6px;line-height:8.58px;color:#10203a;letter-spacing:-0.472px;-webkit-text-stroke:0;">7</span>
<span class="t" style="left:303.2px;top:395px;font-size:6.6px;line-height:8.58px;color:#1a1a1a;letter-spacing:-0.472px;-webkit-text-stroke:0;">000</span>
<span class="t" style="left:351.2px;top:395px;font-size:6.6px;line-height:8.58px;color:#1a1a1a;letter-spacing:-0.468px;-webkit-text-stroke:0;">1205</span>
<span class="t" style="left:399.2px;top:395px;font-size:6.6px;line-height:8.58px;color:#1a1a1a;letter-spacing:-0.472px;-webkit-text-stroke:0;">00</span>
<span class="t" style="left:542.8px;top:395px;font-size:6.6px;line-height:8.58px;color:#1a1a1a;letter-spacing:-0.482px;-webkit-text-stroke:0;">000-1205-00</span>
<span class="t" style="left:583.6px;top:395px;font-size:6.6px;line-height:8.58px;color:#1a1a1a;letter-spacing:-0.472px;-webkit-text-stroke:0;">7</span>
<span class="t" style="left:252.2px;top:405px;font-size:6.6px;line-height:8.58px;color:#333;letter-spacing:-0.472px;-webkit-text-stroke:0;">8</span>
<span class="t" style="left:269.4px;top:405px;font-size:6.6px;line-height:8.58px;color:#10203a;letter-spacing:-0.472px;-webkit-text-stroke:0;">8</span>
<span class="t" style="left:303.2px;top:405px;font-size:6.6px;line-height:8.58px;color:#1a1a1a;letter-spacing:-0.472px;-webkit-text-stroke:0;">000</span>
<span class="t" style="left:351.2px;top:405px;font-size:6.6px;line-height:8.58px;color:#1a1a1a;letter-spacing:-0.468px;-webkit-text-stroke:0;">1210</span>
<span class="t" style="left:399.2px;top:405px;font-size:6.6px;line-height:8.58px;color:#1a1a1a;letter-spacing:-0.472px;-webkit-text-stroke:0;">00</span>
<span class="t" style="left:542.8px;top:405px;font-size:6.6px;line-height:8.58px;color:#1a1a1a;letter-spacing:-0.482px;-webkit-text-stroke:0;">000-1210-00</span>
<span class="t" style="left:583.6px;top:405px;font-size:6.6px;line-height:8.58px;color:#1a1a1a;letter-spacing:-0.472px;-webkit-text-stroke:0;">8</span>
<span class="t" style="left:252.2px;top:415px;font-size:6.6px;line-height:8.58px;color:#333;letter-spacing:-0.472px;-webkit-text-stroke:0;">9</span>
<span class="t" style="left:269.4px;top:415px;font-size:6.6px;line-height:8.58px;color:#10203a;letter-spacing:-0.472px;-webkit-text-stroke:0;">9</span>
<span class="t" style="left:303.2px;top:415px;font-size:6.6px;line-height:8.58px;color:#1a1a1a;letter-spacing:-0.472px;-webkit-text-stroke:0;">000</span>
<span class="t" style="left:351.2px;top:415px;font-size:6.6px;line-height:8.58px;color:#1a1a1a;letter-spacing:-0.468px;-webkit-text-stroke:0;">1220</span>
<span class="t" style="left:399.2px;top:415px;font-size:6.6px;line-height:8.58px;color:#1a1a1a;letter-spacing:-0.472px;-webkit-text-stroke:0;">00</span>
<span class="t" style="left:542.8px;top:415px;font-size:6.6px;line-height:8.58px;color:#1a1a1a;letter-spacing:-0.482px;-webkit-text-stroke:0;">000-1220-00</span>
<span class="t" style="left:583.6px;top:415px;font-size:6.6px;line-height:8.58px;color:#1a1a1a;letter-spacing:-0.472px;-webkit-text-stroke:0;">9</span>
<svg style="left:278.7px;top:325.2px" width="9" height="14" viewBox="0 0 9 14"><path d="M0.5 0.5v10.5l2.4-2.3 1.7 3.8 1.4-0.6-1.7-3.7h3.2z" fill="#fff" stroke="#111" stroke-width="0.55" stroke-linejoin="round"/></svg>
<div style="left:245.6px;top:524.6px;width:764.1999999999999px;height:14.4px;background:linear-gradient(#fbf8df 0,#f3edb0 1.2px,#ede586 2px,#ede586 12.8px,#f5f0b8 13.6px,#f5f0b8 14.4px);"></div>
<svg style="left:247.2px;top:527.3px" width="8" height="8" viewBox="0 0 8 8"><circle cx="4" cy="4" r="3.7" fill="#3aa53a" stroke="#2a7d2a" stroke-width="0.4"/><path d="M2 4.1l1.5 1.5 2.6-3" stroke="#fff" stroke-width="0.9" fill="none"/></svg>
<span class="t" style="left:257.9px;top:528px;font-size:6.7px;line-height:8.71px;color:#1a1a1a;letter-spacing:-0.232px;">Query executed successfully.</span>
<div style="left:813.6px;top:526.6px;width:0.6px;height:10.4px;background:#d3c977;"></div>
<div style="left:902.8px;top:526.6px;width:0.6px;height:10.4px;background:#d3c977;"></div>
<div style="left:928px;top:526.6px;width:0.6px;height:10.4px;background:#d3c977;"></div>
<div style="left:949.4px;top:526.6px;width:0.6px;height:10.4px;background:#d3c977;"></div>
<div style="left:978.3px;top:526.6px;width:0.6px;height:10.4px;background:#d3c977;"></div>
<span class="t" style="left:816.4px;top:528px;font-size:6.7px;line-height:8.71px;color:#1a1a1a;letter-spacing:-0.496px;">EWITTENHAGENLT (12.0 SP1)</span>
<span class="t" style="left:906.1px;top:528px;font-size:6.7px;line-height:8.71px;color:#1a1a1a;letter-spacing:-0.375px;">sa (57)</span>
<span class="t" style="left:931.9px;top:528px;font-size:6.7px;line-height:8.71px;color:#1a1a1a;letter-spacing:-0.903px;">TWO</span>
<span class="t" style="left:952.7px;top:528px;font-size:6.7px;line-height:8.71px;color:#1a1a1a;letter-spacing:-0.468px;">00:00:00</span>
<span class="t" style="left:981.6px;top:528px;font-size:6.7px;line-height:8.71px;color:#1a1a1a;letter-spacing:-0.184px;">9 rows</span>
<div style="left:1010px;top:80px;width:14px;height:459px;background:#2e4263;"></div>
<div style="left:1013.6px;top:67.4px;width:10.4px;height:41.8px;background:#38507a;"></div>
<svg style="left:1015.4px;top:68.6px" width="7.4" height="8" viewBox="0 0 7.4 8"><rect x="0.4" y="0.8" width="4.6" height="6" fill="#e9edf5" stroke="#8b98b5" stroke-width="0.4"/><path d="M3.4 1.4l3 -0.6 0.6 3.4-2.2 2.6-1.4-1z" fill="#e7cf4a" stroke="#8a7a2a" stroke-width="0.35"/></svg>
<span class="t" style="left:1016px;top:90px;font-size:6.7px;line-height:8.71px;color:#f0f3fa;letter-spacing:-0.288px;transform:rotate(90deg);transform-origin:0 0;left:1022.4px;top:80.2px;">Properties</span>
<div style="left:0px;top:538.9px;width:1024px;height:16.1px;background:#293a57;"></div>
<span class="t" style="left:3.2px;top:545px;font-size:6.7px;line-height:8.71px;color:#fff;letter-spacing:-0.422px;">Matches: (</span>
<span class="t" style="left:835px;top:545px;font-size:6.7px;line-height:8.71px;color:#fff;letter-spacing:-0.358px;">Ln 1</span>
<span class="t" style="left:933.9px;top:545px;font-size:6.7px;line-height:8.71px;color:#fff;letter-spacing:-0.365px;">Col 1</span>
<span class="t" style="left:1005.6px;top:545px;font-size:6.7px;line-height:8.71px;color:#fff;letter-spacing:-0.419px;">INS</span>
</div></body></html>
